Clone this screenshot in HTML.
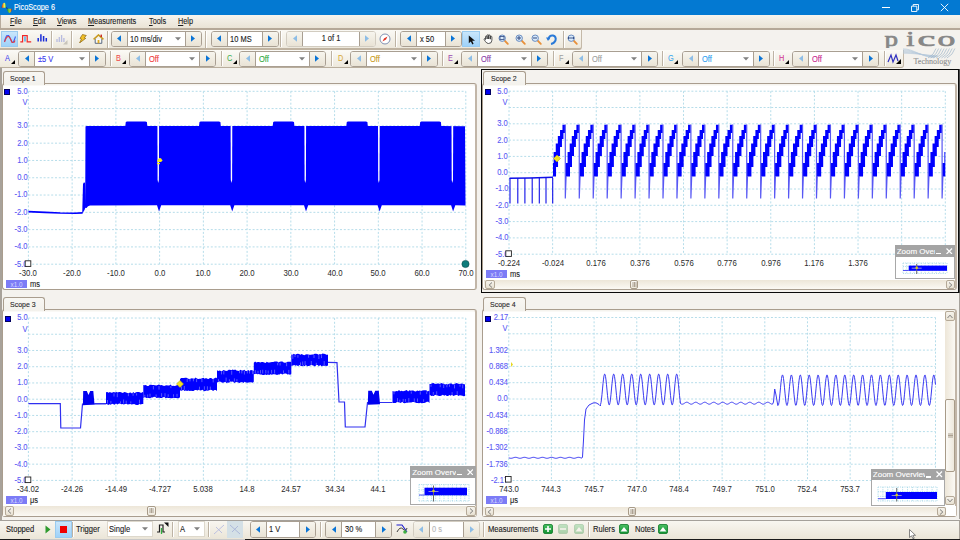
<!DOCTYPE html><html><head><meta charset="utf-8"><style>
html,body{margin:0;padding:0;width:960px;height:540px;overflow:hidden;background:#F4F2EE;font-family:"Liberation Sans", sans-serif;}
div{box-sizing:border-box;-webkit-text-stroke:0.12px currentColor;}
.tb{position:absolute;background:linear-gradient(#FBFAF6,#EDE8DC);}
.ctl{position:absolute;border:1px solid #A99F92;border-radius:3px;background:#fff;overflow:hidden;}
.cb{position:absolute;top:0;bottom:0;background:linear-gradient(#F7F5EE,#E9E3D5);}
.sep{position:absolute;width:2px;border-left:1px solid #BDB3A4;border-right:1px solid #FFFFFF;}
</style></head><body>
<div style="position:absolute;left:0px;top:0px;width:960px;height:14.6px;background:#0379D2;"></div>
<svg style="position:absolute;left:1px;top:2px" width="11" height="11" viewBox="0 0 11 11"><defs><linearGradient id="ig" x1="0" x2="1"><stop offset="0" stop-color="#c01010"/><stop offset="0.35" stop-color="#f0a020"/><stop offset="0.65" stop-color="#e8f060"/><stop offset="1" stop-color="#40c040"/></linearGradient><linearGradient id="ig2" x1="0" x2="1"><stop offset="0" stop-color="#208a20"/><stop offset="0.4" stop-color="#70d030"/><stop offset="0.7" stop-color="#e0b020"/><stop offset="1" stop-color="#b02010"/></linearGradient></defs><path d="M0.5 5.8 Q1.5 0.5 3.5 0.8 Q5 1.2 5 5.8 Z" fill="url(#ig)"/><path d="M5 5.3 L5.8 5.3 L6.8 6.8 L6 7.2Z" fill="#10208a"/><path d="M6 6.8 L10.8 6.8 Q10.5 10.5 8.5 11 Q6.5 10.8 6 6.8Z" fill="url(#ig2)"/></svg>
<div style="position:absolute;left:14px;top:3.65px;font-size:8.18px;line-height:8.18px;color:#FFFFFF;white-space:nowrap;transform:scaleX(0.893);transform-origin:left center;">PicoScope 6</div>
<div style="position:absolute;left:882px;top:6.5px;width:7.5px;height:0.9px;background:#fff;"></div>
<svg style="position:absolute;left:910.5px;top:3.5px" width="8" height="8" viewBox="0 0 8 8"><path d="M0.5 2.2h5.3v5.3h-5.3z M2.2 2.2v-1.7h5.3v5.3h-1.7" fill="none" stroke="#fff" stroke-width="0.9"/></svg>
<svg style="position:absolute;left:939.5px;top:3px" width="9" height="9" viewBox="0 0 9 9"><path d="M0.8 0.8L8.2 8.2M8.2 0.8L0.8 8.2" stroke="#fff" stroke-width="0.9"/></svg>
<div style="position:absolute;left:0px;top:14.6px;width:960px;height:14.4px;background:linear-gradient(#F7F4EE,#E9E2D4);border-left:1px solid #B7AB9C;"></div>
<div style="position:absolute;left:10px;top:18.25px;font-size:8.18px;line-height:8.18px;color:#1E1E1E;white-space:nowrap;transform:scaleX(0.893);transform-origin:left center;"><u>F</u>ile</div>
<div style="position:absolute;left:33.3px;top:18.25px;font-size:8.18px;line-height:8.18px;color:#1E1E1E;white-space:nowrap;transform:scaleX(0.893);transform-origin:left center;"><u>E</u>dit</div>
<div style="position:absolute;left:57.3px;top:18.25px;font-size:8.18px;line-height:8.18px;color:#1E1E1E;white-space:nowrap;transform:scaleX(0.893);transform-origin:left center;"><u>V</u>iews</div>
<div style="position:absolute;left:88px;top:18.25px;font-size:8.18px;line-height:8.18px;color:#1E1E1E;white-space:nowrap;transform:scaleX(0.893);transform-origin:left center;"><u>M</u>easurements</div>
<div style="position:absolute;left:149px;top:18.25px;font-size:8.18px;line-height:8.18px;color:#1E1E1E;white-space:nowrap;transform:scaleX(0.893);transform-origin:left center;"><u>T</u>ools</div>
<div style="position:absolute;left:177.7px;top:18.25px;font-size:8.18px;line-height:8.18px;color:#1E1E1E;white-space:nowrap;transform:scaleX(0.893);transform-origin:left center;"><u>H</u>elp</div>
<div class="tb" style="left:0;top:29px;width:582px;height:21px;border-bottom:2px solid #BFB3A1;border-right:1px solid #C4B9A8;border-radius:0 0 3px 0;"></div>
<div class="tb" style="left:0;top:50px;width:904px;height:18px;border-bottom:1px solid #B9AE9D;border-right:1px solid #C4B9A8;border-radius:0 0 3px 0;"></div>
<div style="position:absolute;left:582px;top:29px;width:378px;height:21px;background:#F4F2EE;"></div>
<div style="position:absolute;left:904px;top:48px;width:56px;height:20px;background:#F4F2EE;"></div>
<div style="position:absolute;left:0px;top:28.2px;width:960px;height:1.6px;background:#B5A898;"></div>
<div style="position:absolute;left:1px;top:30.5px;width:17px;height:16px;background:linear-gradient(#C9E6FB,#9FD2F9);border:1px solid #9ACBEF;"></div>
<svg style="position:absolute;left:3.5px;top:34.5px" width="12" height="8" viewBox="0 0 12 8"><path d="M0.5 6.5 C2.5 -1.5,4.5 -1.5,6.5 4 S9.5 8,11.5 1.5" fill="none" stroke="#4060F0" stroke-width="1.1"/><path d="M0.5 7 C3 0,5 0,7 5 S9.5 8.5,11 5.5" fill="none" stroke="#E83838" stroke-width="1.1"/></svg>
<svg style="position:absolute;left:20px;top:35px" width="11.5" height="7.5" viewBox="0 0 11.5 7.5"><path d="M0.3 6.8H2.6V0.7H7.2V6.8H11.2" fill="none" stroke="#F02828" stroke-width="1.2"/><path d="M5 1.5V6.5" stroke="#40A8E8" stroke-width="1.4"/></svg>
<svg style="position:absolute;left:36.5px;top:34px" width="11" height="8" viewBox="0 0 11 8"><path d="M1.2 7.5V4M3.9 7.5V0.3M6.6 7.5V2M9.3 7.5V4" stroke="#1A2CD8" stroke-width="1.5"/></svg>
<div class="sep" style="left:51px;top:30.5px;height:17px;"></div>
<svg style="position:absolute;left:56px;top:33px" width="12" height="12" viewBox="0 0 12 12"><path d="M1 9V6M3.3 9V4M5.6 9V2M7.9 9V5" stroke="#B7BBE0" stroke-width="1.3"/><path d="M7 11.5L11.5 7V11.5Z" fill="#C8C4BA"/></svg>
<div class="sep" style="left:71px;top:30.5px;height:17px;"></div>
<svg style="position:absolute;left:77.5px;top:33.8px" width="9" height="9.5" viewBox="0 0 9 9.5"><path d="M4.5 0.5L8.3 1.5L6.2 3.8L7.8 4.3L1.5 9L3.5 5L2 4.4Z" fill="#F0C028" stroke="#8A6410" stroke-width="0.7" stroke-linejoin="round"/></svg>
<svg style="position:absolute;left:92.5px;top:33.5px" width="11" height="10" viewBox="0 0 11 10"><path d="M2.2 4.8V9.3H8.8V4.8" fill="#FAFAF6" stroke="#4A5A78" stroke-width="0.9"/><path d="M0.6 5.4L5.5 0.9L10.4 5.4" fill="none" stroke="#C89A20" stroke-width="1.5"/><rect x="4.6" y="6" width="1.8" height="3.3" fill="#E0A820"/><rect x="7.6" y="0.6" width="1.3" height="2.4" fill="#C81818"/></svg>
<div class="sep" style="left:107px;top:30.5px;height:17px;"></div>
<div class="ctl" style="left:110.5px;top:31px;width:91.0px;height:15.5px;"><div class="cb" style="left:0;width:16px;border-right:1px solid #A99F92;"></div><div class="cb" style="right:0;width:16px;border-left:1px solid #A99F92;"></div></div>
<svg style="position:absolute;left:116.0px;top:35.25px" width="6" height="7" viewBox="0 0 6 7"><path d="M5 0.3L1 3.5L5 6.7Z" fill="#0A74D6"/></svg>
<svg style="position:absolute;left:190.0px;top:35.25px" width="6" height="7" viewBox="0 0 6 7"><path d="M1 0.3L5 3.5L1 6.7Z" fill="#0A74D6"/></svg>
<div style="position:absolute;left:130.0px;top:34.59px;font-size:8.40px;line-height:8.40px;color:#222;white-space:nowrap;transform:scaleX(0.893);transform-origin:left center;">10 ms/div</div>
<svg style="position:absolute;left:174.5px;top:37.05px" width="6" height="4" viewBox="0 0 6 4"><path d="M0 0.2H6L3 3.5Z" fill="#808080"/></svg>
<div class="sep" style="left:205px;top:30.5px;height:17px;"></div>
<div class="ctl" style="left:210.5px;top:31px;width:68.0px;height:15.5px;"><div class="cb" style="left:0;width:16px;border-right:1px solid #A99F92;"></div><div class="cb" style="right:0;width:16px;border-left:1px solid #A99F92;"></div></div>
<svg style="position:absolute;left:216.0px;top:35.25px" width="6" height="7" viewBox="0 0 6 7"><path d="M5 0.3L1 3.5L5 6.7Z" fill="#0A74D6"/></svg>
<svg style="position:absolute;left:267.0px;top:35.25px" width="6" height="7" viewBox="0 0 6 7"><path d="M1 0.3L5 3.5L1 6.7Z" fill="#0A74D6"/></svg>
<div style="position:absolute;left:230.0px;top:34.59px;font-size:8.40px;line-height:8.40px;color:#222;white-space:nowrap;transform:scaleX(0.893);transform-origin:left center;">10 MS</div>
<div class="sep" style="left:280px;top:31px;height:16px;"></div>
<div class="ctl" style="left:286px;top:31px;width:89.5px;height:15.5px;border-color:#D2CCC0;"><div class="cb" style="left:0;width:16px;border-right:1px solid #A99F92;"></div><div class="cb" style="right:0;width:16px;border-left:1px solid #A99F92;"></div></div>
<svg style="position:absolute;left:291.5px;top:35.25px" width="6" height="7" viewBox="0 0 6 7"><path d="M5 0.3L1 3.5L5 6.7Z" fill="#8DBDE6"/></svg>
<svg style="position:absolute;left:364.0px;top:35.25px" width="6" height="7" viewBox="0 0 6 7"><path d="M1 0.3L5 3.5L1 6.7Z" fill="#8DBDE6"/></svg>
<div style="position:absolute;left:302.0px;top:34.34px;width:58px;text-align:center;font-size:8.40px;line-height:8.40px;color:#222;white-space:nowrap;transform:scaleX(0.893);">1 of 1</div>
<svg style="position:absolute;left:379px;top:33px" width="12" height="12" viewBox="0 0 12 12"><circle cx="6" cy="6" r="5" fill="#fff" stroke="#8090B0" stroke-width="1"/><path d="M8.5 3.5L5 5.5L3.5 8.5L7 6.5Z" fill="#E03020"/></svg>
<div class="sep" style="left:394.5px;top:31px;height:16px;"></div>
<div class="ctl" style="left:400px;top:31px;width:61.5px;height:15.5px;"><div class="cb" style="left:0;width:16px;border-right:1px solid #A99F92;"></div><div class="cb" style="right:0;width:16px;border-left:1px solid #A99F92;"></div></div>
<svg style="position:absolute;left:405.5px;top:35.25px" width="6" height="7" viewBox="0 0 6 7"><path d="M5 0.3L1 3.5L5 6.7Z" fill="#0A74D6"/></svg>
<svg style="position:absolute;left:450.0px;top:35.25px" width="6" height="7" viewBox="0 0 6 7"><path d="M1 0.3L5 3.5L1 6.7Z" fill="#0A74D6"/></svg>
<div style="position:absolute;left:419.5px;top:34.59px;font-size:8.40px;line-height:8.40px;color:#222;white-space:nowrap;transform:scaleX(0.893);transform-origin:left center;">x 50</div>
<div style="position:absolute;left:462px;top:30.5px;width:18px;height:16px;background:linear-gradient(#C9E6FB,#9FD2F9);border:1px solid #9ACBEF;"></div>
<svg style="position:absolute;left:467.5px;top:34.5px" width="8" height="10" viewBox="0 0 8 10"><path d="M0.8 0.5V8.3L2.8 6.4L4.4 9.4L5.6 8.8L4.2 5.8H7Z" fill="#111"/></svg>
<svg style="position:absolute;left:482.5px;top:34px" width="11" height="10" viewBox="0 0 11 10"><path d="M2.5 5.5V2.8Q2.5 2 3.3 2T4.1 2.8V5V1.5Q4.1 0.7 4.9 0.7T5.7 1.5V5V1.8Q5.7 1 6.5 1T7.3 1.8V5.2V3Q7.3 2.2 8.1 2.2T8.9 3V6.2Q8.9 9.5 5.6 9.5Q3.6 9.5 2.5 7.6L1.2 5.6Q0.8 4.8 1.6 4.6T2.5 5.5Z" fill="#fff" stroke="#222" stroke-width="0.75"/></svg>
<svg style="position:absolute;left:497px;top:32.5px" width="13" height="13" viewBox="0 0 13 13"><path d="M7.2 7.2L10.8 10.8" stroke="#E8903A" stroke-width="1.9" stroke-linecap="round"/><circle cx="5.2" cy="5.2" r="3.2" fill="#D8EAFA" stroke="#6A8CC0" stroke-width="1"/><rect x="3" y="3.5" width="4" height="3" fill="none" stroke="#304880" stroke-width="0.8"/></svg>
<svg style="position:absolute;left:514px;top:32.5px" width="13" height="13" viewBox="0 0 13 13"><path d="M7.2 7.2L10.8 10.8" stroke="#E8903A" stroke-width="1.9" stroke-linecap="round"/><circle cx="5.2" cy="5.2" r="3.2" fill="#D8EAFA" stroke="#6A8CC0" stroke-width="1"/><path d="M3 5H7M5 3V7" stroke="#304880" stroke-width="1"/></svg>
<svg style="position:absolute;left:530px;top:32.5px" width="13" height="13" viewBox="0 0 13 13"><path d="M7.2 7.2L10.8 10.8" stroke="#E8903A" stroke-width="1.9" stroke-linecap="round"/><circle cx="5.2" cy="5.2" r="3.2" fill="#D8EAFA" stroke="#6A8CC0" stroke-width="1"/><path d="M3 5H7" stroke="#304880" stroke-width="1"/></svg>
<svg style="position:absolute;left:546px;top:32.5px" width="12" height="13" viewBox="0 0 12 13"><path d="M2.5 6.5Q3 2 7 2.5Q10.5 3.5 9.5 7.5Q8 10.5 5 11" fill="none" stroke="#2A7AD8" stroke-width="2"/><path d="M0 4.5L4.5 4.5L2 8Z" fill="#2A7AD8"/></svg>
<div class="sep" style="left:563px;top:30.5px;height:17px;"></div>
<svg style="position:absolute;left:566px;top:32.5px" width="13" height="13" viewBox="0 0 13 13"><path d="M7.2 7.2L10.8 10.8" stroke="#E8903A" stroke-width="1.9" stroke-linecap="round"/><circle cx="5.2" cy="5.2" r="3.2" fill="#D8EAFA" stroke="#6A8CC0" stroke-width="1"/><path d="M2.5 5H7.5M2.5 4V6M7.5 4V6" stroke="#304880" stroke-width="0.9"/></svg>
<div style="position:absolute;left:4.5px;top:54.65px;font-size:8.18px;line-height:8.18px;color:#3A3AF0;white-space:nowrap;transform:scaleX(0.893);transform-origin:left center;-webkit-text-stroke:0.05px currentColor;">A</div>
<svg style="position:absolute;left:10.5px;top:60px" width="4" height="4" viewBox="0 0 4 4"><path d="M4 0V4H0Z" fill="#000"/></svg>
<div class="ctl" style="left:18px;top:51px;width:87.5px;height:15.5px;"><div class="cb" style="left:0;width:16px;border-right:1px solid #A99F92;"></div><div class="cb" style="right:0;width:16px;border-left:1px solid #A99F92;"></div></div>
<svg style="position:absolute;left:23.5px;top:55.25px" width="6" height="7" viewBox="0 0 6 7"><path d="M5 0.3L1 3.5L5 6.7Z" fill="#0A74D6"/></svg>
<svg style="position:absolute;left:94.0px;top:55.25px" width="6" height="7" viewBox="0 0 6 7"><path d="M1 0.3L5 3.5L1 6.7Z" fill="#0A74D6"/></svg>
<div style="position:absolute;left:37.5px;top:54.59px;font-size:8.40px;line-height:8.40px;color:#3A3AF0;white-space:nowrap;transform:scaleX(0.893);transform-origin:left center;">±5 V</div>
<svg style="position:absolute;left:78.5px;top:57.05px" width="6" height="4" viewBox="0 0 6 4"><path d="M0 0.2H6L3 3.5Z" fill="#808080"/></svg>
<div style="position:absolute;left:115.5px;top:54.65px;font-size:8.18px;line-height:8.18px;color:#F04848;white-space:nowrap;transform:scaleX(0.893);transform-origin:left center;-webkit-text-stroke:0.05px currentColor;">B</div>
<svg style="position:absolute;left:121.5px;top:60px" width="4" height="4" viewBox="0 0 4 4"><path d="M4 0V4H0Z" fill="#000"/></svg>
<div class="ctl" style="left:129px;top:51px;width:87px;height:15.5px;"><div class="cb" style="left:0;width:16px;border-right:1px solid #A99F92;"></div><div class="cb" style="right:0;width:16px;border-left:1px solid #A99F92;"></div></div>
<svg style="position:absolute;left:134.5px;top:55.25px" width="6" height="7" viewBox="0 0 6 7"><path d="M5 0.3L1 3.5L5 6.7Z" fill="#8DBDE6"/></svg>
<svg style="position:absolute;left:204.5px;top:55.25px" width="6" height="7" viewBox="0 0 6 7"><path d="M1 0.3L5 3.5L1 6.7Z" fill="#0A74D6"/></svg>
<div style="position:absolute;left:148.5px;top:54.59px;font-size:8.40px;line-height:8.40px;color:#F03838;white-space:nowrap;transform:scaleX(0.893);transform-origin:left center;">Off</div>
<svg style="position:absolute;left:189px;top:57.05px" width="6" height="4" viewBox="0 0 6 4"><path d="M0 0.2H6L3 3.5Z" fill="#808080"/></svg>
<div style="position:absolute;left:226.8px;top:54.65px;font-size:8.18px;line-height:8.18px;color:#3CB050;white-space:nowrap;transform:scaleX(0.893);transform-origin:left center;-webkit-text-stroke:0.05px currentColor;">C</div>
<svg style="position:absolute;left:232.8px;top:60px" width="4" height="4" viewBox="0 0 4 4"><path d="M4 0V4H0Z" fill="#000"/></svg>
<div class="ctl" style="left:239px;top:51px;width:86.5px;height:15.5px;"><div class="cb" style="left:0;width:16px;border-right:1px solid #A99F92;"></div><div class="cb" style="right:0;width:16px;border-left:1px solid #A99F92;"></div></div>
<svg style="position:absolute;left:244.5px;top:55.25px" width="6" height="7" viewBox="0 0 6 7"><path d="M5 0.3L1 3.5L5 6.7Z" fill="#8DBDE6"/></svg>
<svg style="position:absolute;left:314.0px;top:55.25px" width="6" height="7" viewBox="0 0 6 7"><path d="M1 0.3L5 3.5L1 6.7Z" fill="#0A74D6"/></svg>
<div style="position:absolute;left:258.5px;top:54.59px;font-size:8.40px;line-height:8.40px;color:#30A840;white-space:nowrap;transform:scaleX(0.893);transform-origin:left center;">Off</div>
<svg style="position:absolute;left:298.5px;top:57.05px" width="6" height="4" viewBox="0 0 6 4"><path d="M0 0.2H6L3 3.5Z" fill="#808080"/></svg>
<div style="position:absolute;left:337.5px;top:54.65px;font-size:8.18px;line-height:8.18px;color:#D8A838;white-space:nowrap;transform:scaleX(0.893);transform-origin:left center;-webkit-text-stroke:0.05px currentColor;">D</div>
<svg style="position:absolute;left:343.5px;top:60px" width="4" height="4" viewBox="0 0 4 4"><path d="M4 0V4H0Z" fill="#000"/></svg>
<div class="ctl" style="left:350px;top:51px;width:87.5px;height:15.5px;"><div class="cb" style="left:0;width:16px;border-right:1px solid #A99F92;"></div><div class="cb" style="right:0;width:16px;border-left:1px solid #A99F92;"></div></div>
<svg style="position:absolute;left:355.5px;top:55.25px" width="6" height="7" viewBox="0 0 6 7"><path d="M5 0.3L1 3.5L5 6.7Z" fill="#8DBDE6"/></svg>
<svg style="position:absolute;left:426.0px;top:55.25px" width="6" height="7" viewBox="0 0 6 7"><path d="M1 0.3L5 3.5L1 6.7Z" fill="#0A74D6"/></svg>
<div style="position:absolute;left:369.5px;top:54.59px;font-size:8.40px;line-height:8.40px;color:#C89A20;white-space:nowrap;transform:scaleX(0.893);transform-origin:left center;">Off</div>
<svg style="position:absolute;left:410.5px;top:57.05px" width="6" height="4" viewBox="0 0 6 4"><path d="M0 0.2H6L3 3.5Z" fill="#808080"/></svg>
<div style="position:absolute;left:447.5px;top:54.65px;font-size:8.18px;line-height:8.18px;color:#9A4AB0;white-space:nowrap;transform:scaleX(0.893);transform-origin:left center;-webkit-text-stroke:0.05px currentColor;">E</div>
<svg style="position:absolute;left:453.5px;top:60px" width="4" height="4" viewBox="0 0 4 4"><path d="M4 0V4H0Z" fill="#000"/></svg>
<div class="ctl" style="left:461px;top:51px;width:86.5px;height:15.5px;"><div class="cb" style="left:0;width:16px;border-right:1px solid #A99F92;"></div><div class="cb" style="right:0;width:16px;border-left:1px solid #A99F92;"></div></div>
<svg style="position:absolute;left:466.5px;top:55.25px" width="6" height="7" viewBox="0 0 6 7"><path d="M5 0.3L1 3.5L5 6.7Z" fill="#8DBDE6"/></svg>
<svg style="position:absolute;left:536.0px;top:55.25px" width="6" height="7" viewBox="0 0 6 7"><path d="M1 0.3L5 3.5L1 6.7Z" fill="#0A74D6"/></svg>
<div style="position:absolute;left:480.5px;top:54.59px;font-size:8.40px;line-height:8.40px;color:#8A40A8;white-space:nowrap;transform:scaleX(0.893);transform-origin:left center;">Off</div>
<svg style="position:absolute;left:520.5px;top:57.05px" width="6" height="4" viewBox="0 0 6 4"><path d="M0 0.2H6L3 3.5Z" fill="#808080"/></svg>
<div style="position:absolute;left:558.5px;top:54.65px;font-size:8.18px;line-height:8.18px;color:#A0A0A0;white-space:nowrap;transform:scaleX(0.893);transform-origin:left center;-webkit-text-stroke:0.05px currentColor;">F</div>
<svg style="position:absolute;left:564.5px;top:60px" width="4" height="4" viewBox="0 0 4 4"><path d="M4 0V4H0Z" fill="#000"/></svg>
<div class="ctl" style="left:572px;top:51px;width:86px;height:15.5px;"><div class="cb" style="left:0;width:16px;border-right:1px solid #A99F92;"></div><div class="cb" style="right:0;width:16px;border-left:1px solid #A99F92;"></div></div>
<svg style="position:absolute;left:577.5px;top:55.25px" width="6" height="7" viewBox="0 0 6 7"><path d="M5 0.3L1 3.5L5 6.7Z" fill="#8DBDE6"/></svg>
<svg style="position:absolute;left:646.5px;top:55.25px" width="6" height="7" viewBox="0 0 6 7"><path d="M1 0.3L5 3.5L1 6.7Z" fill="#0A74D6"/></svg>
<div style="position:absolute;left:591.5px;top:54.59px;font-size:8.40px;line-height:8.40px;color:#A0A0A0;white-space:nowrap;transform:scaleX(0.893);transform-origin:left center;">Off</div>
<svg style="position:absolute;left:631px;top:57.05px" width="6" height="4" viewBox="0 0 6 4"><path d="M0 0.2H6L3 3.5Z" fill="#808080"/></svg>
<div style="position:absolute;left:668px;top:54.65px;font-size:8.18px;line-height:8.18px;color:#38A8F0;white-space:nowrap;transform:scaleX(0.893);transform-origin:left center;-webkit-text-stroke:0.05px currentColor;">G</div>
<svg style="position:absolute;left:674px;top:60px" width="4" height="4" viewBox="0 0 4 4"><path d="M4 0V4H0Z" fill="#000"/></svg>
<div class="ctl" style="left:682px;top:51px;width:87.5px;height:15.5px;"><div class="cb" style="left:0;width:16px;border-right:1px solid #A99F92;"></div><div class="cb" style="right:0;width:16px;border-left:1px solid #A99F92;"></div></div>
<svg style="position:absolute;left:687.5px;top:55.25px" width="6" height="7" viewBox="0 0 6 7"><path d="M5 0.3L1 3.5L5 6.7Z" fill="#8DBDE6"/></svg>
<svg style="position:absolute;left:758.0px;top:55.25px" width="6" height="7" viewBox="0 0 6 7"><path d="M1 0.3L5 3.5L1 6.7Z" fill="#0A74D6"/></svg>
<div style="position:absolute;left:701.5px;top:54.59px;font-size:8.40px;line-height:8.40px;color:#30A0F0;white-space:nowrap;transform:scaleX(0.893);transform-origin:left center;">Off</div>
<svg style="position:absolute;left:742.5px;top:57.05px" width="6" height="4" viewBox="0 0 6 4"><path d="M0 0.2H6L3 3.5Z" fill="#808080"/></svg>
<div style="position:absolute;left:779px;top:54.65px;font-size:8.18px;line-height:8.18px;color:#D03090;white-space:nowrap;transform:scaleX(0.893);transform-origin:left center;-webkit-text-stroke:0.05px currentColor;">H</div>
<svg style="position:absolute;left:785px;top:60px" width="4" height="4" viewBox="0 0 4 4"><path d="M4 0V4H0Z" fill="#000"/></svg>
<div class="ctl" style="left:792px;top:51px;width:87px;height:15.5px;"><div class="cb" style="left:0;width:16px;border-right:1px solid #A99F92;"></div><div class="cb" style="right:0;width:16px;border-left:1px solid #A99F92;"></div></div>
<svg style="position:absolute;left:797.5px;top:55.25px" width="6" height="7" viewBox="0 0 6 7"><path d="M5 0.3L1 3.5L5 6.7Z" fill="#8DBDE6"/></svg>
<svg style="position:absolute;left:867.5px;top:55.25px" width="6" height="7" viewBox="0 0 6 7"><path d="M1 0.3L5 3.5L1 6.7Z" fill="#0A74D6"/></svg>
<div style="position:absolute;left:811.5px;top:54.59px;font-size:8.40px;line-height:8.40px;color:#C82890;white-space:nowrap;transform:scaleX(0.893);transform-origin:left center;">Off</div>
<svg style="position:absolute;left:852px;top:57.05px" width="6" height="4" viewBox="0 0 6 4"><path d="M0 0.2H6L3 3.5Z" fill="#808080"/></svg>
<div class="sep" style="left:109.5px;top:51px;height:15px;"></div>
<div class="sep" style="left:220.5px;top:51px;height:15px;"></div>
<div class="sep" style="left:331.2px;top:51px;height:15px;"></div>
<div class="sep" style="left:441.5px;top:51px;height:15px;"></div>
<div class="sep" style="left:552.5px;top:51px;height:15px;"></div>
<div class="sep" style="left:661.8px;top:51px;height:15px;"></div>
<div class="sep" style="left:773px;top:51px;height:15px;"></div>
<div class="sep" style="left:883.5px;top:51px;height:15px;"></div>
<svg style="position:absolute;left:887px;top:53px" width="14" height="11" viewBox="0 0 14 11"><path d="M1 9L4 2L6 9L9 2L11 8" fill="none" stroke="#3030C0" stroke-width="1.2"/><path d="M14 6V11H9Z" fill="#000"/></svg>
<div style="position:absolute;left:884px;top:28px;width:76px;height:20px;overflow:hidden;">
<svg style="position:absolute;left:-884px;top:-28px" width="960" height="80" viewBox="0 0 960 80"><g font-family="Liberation Serif" font-size="22" fill="#878787" stroke="#878787" stroke-width="0.7"><text transform="translate(884.6,45.9) scale(1.23,1)">p</text><text transform="translate(906.3,45.9) scale(1.33,1)">i</text><text transform="translate(917.5,45.9) scale(1.82,1)">c</text><text transform="translate(937.4,45.9) scale(1.62,1)">o</text></g></svg></div>
<svg style="position:absolute;left:0;top:0" width="960" height="80" viewBox="0 0 960 80"><path d="M903.0 48.8 C914.0 48.8, 922.0 57.5, 934.0 57.5" fill="none" stroke="#B4C8DA" stroke-width="0.6"/><path d="M903.0 49.7 C914.0 49.7, 922.0 56.9, 934.8 57.2" fill="none" stroke="#B4C8DA" stroke-width="0.6"/><path d="M903.0 50.6 C914.0 50.6, 922.0 56.3, 935.6 56.9" fill="none" stroke="#B4C8DA" stroke-width="0.6"/><path d="M903.0 51.5 C914.0 51.5, 922.0 55.7, 936.4 56.6" fill="none" stroke="#B4C8DA" stroke-width="0.6"/><path d="M903.0 52.4 C914.0 52.4, 922.0 55.1, 937.2 56.3" fill="none" stroke="#B4C8DA" stroke-width="0.6"/><path d="M903.0 53.3 C914.0 53.3, 922.0 54.5, 938.0 56.0" fill="none" stroke="#B4C8DA" stroke-width="0.6"/><path d="M928.0 58 Q934.0 55, 936.0 48.5" fill="none" stroke="#94ACC2" stroke-width="0.6"/><path d="M930.7 58 Q936.7 55, 938.7 48.5" fill="none" stroke="#94ACC2" stroke-width="0.6"/><path d="M933.4 58 Q939.4 55, 941.4 48.5" fill="none" stroke="#94ACC2" stroke-width="0.6"/><path d="M936.1 58 Q942.1 55, 944.1 48.5" fill="none" stroke="#94ACC2" stroke-width="0.6"/><path d="M938.8 58 Q944.8 55, 946.8 48.5" fill="none" stroke="#94ACC2" stroke-width="0.6"/><path d="M941.5 58 Q947.5 55, 949.5 48.5" fill="none" stroke="#94ACC2" stroke-width="0.6"/><path d="M944.2 58 Q950.2 55, 952.2 48.5" fill="none" stroke="#94ACC2" stroke-width="0.6"/><path d="M946.9 58 Q952.9 55, 954.9 48.5" fill="none" stroke="#94ACC2" stroke-width="0.6"/></svg>
<div style="position:absolute;left:913.5px;top:58.3px;font-family:'Liberation Serif',serif;font-size:8px;line-height:8px;color:#8E8E8E;">Technology</div>
<div style="position:absolute;left:0px;top:68px;width:1.5px;height:472px;background:#A8A29A;"></div>
<div style="position:absolute;left:958.9px;top:293px;width:1.1px;height:226px;background:#A6A29C;"></div>
<div style="position:absolute;left:2px;top:83px;width:475px;height:207px;border:1px solid #A99D8E;border-right:2px solid #C2B6A8;border-radius:3px;background:#fff;box-shadow:inset 0 1.5px 0 #F5F3EE;"></div>
<div style="position:absolute;left:2.5px;top:70.5px;width:42.5px;height:14.7px;border:1px solid #A99D8E;border-bottom:none;border-radius:3px 3px 0 0;background:linear-gradient(#F8F7F3,#F3F1EC);"></div>
<div style="position:absolute;left:10.0px;top:74.76px;font-size:7.84px;line-height:7.84px;color:#2A2A2A;white-space:nowrap;transform:scaleX(0.893);transform-origin:left center;">Scope 1</div>
<div style="position:absolute;left:482px;top:83px;width:475px;height:207px;border:1px solid #A99D8E;border-right:2px solid #C2B6A8;border-radius:3px;background:#fff;box-shadow:inset 0 1.5px 0 #F5F3EE;"></div>
<div style="position:absolute;left:483px;top:70.8px;width:42.5px;height:14.400000000000002px;border:1px solid #A99D8E;border-bottom:none;border-radius:3px 3px 0 0;background:linear-gradient(#F8F7F3,#F3F1EC);"></div>
<div style="position:absolute;left:490.5px;top:75.06px;font-size:7.84px;line-height:7.84px;color:#2A2A2A;white-space:nowrap;transform:scaleX(0.893);transform-origin:left center;">Scope 2</div>
<div style="position:absolute;left:481px;top:69px;width:478px;height:224px;border:1px solid #0A0A0A;"></div>
<div style="position:absolute;left:959px;top:69px;width:1px;height:224px;background:#4A4A4A;"></div>
<div style="position:absolute;left:2px;top:309px;width:475px;height:208px;border:1px solid #A99D8E;border-right:2px solid #C2B6A8;border-radius:3px;background:#fff;box-shadow:inset 0 1.5px 0 #F5F3EE;"></div>
<div style="position:absolute;left:2.5px;top:297px;width:42.5px;height:14.2px;border:1px solid #A99D8E;border-bottom:none;border-radius:3px 3px 0 0;background:linear-gradient(#F8F7F3,#F3F1EC);"></div>
<div style="position:absolute;left:10.0px;top:301.26px;font-size:7.84px;line-height:7.84px;color:#2A2A2A;white-space:nowrap;transform:scaleX(0.893);transform-origin:left center;">Scope 3</div>
<div style="position:absolute;left:482px;top:309px;width:475px;height:208px;border:1px solid #A99D8E;border-right:2px solid #C2B6A8;border-radius:3px;background:#fff;box-shadow:inset 0 1.5px 0 #F5F3EE;"></div>
<div style="position:absolute;left:482.5px;top:297px;width:43.0px;height:14.2px;border:1px solid #A99D8E;border-bottom:none;border-radius:3px 3px 0 0;background:linear-gradient(#F8F7F3,#F3F1EC);"></div>
<div style="position:absolute;left:490.0px;top:301.26px;font-size:7.84px;line-height:7.84px;color:#2A2A2A;white-space:nowrap;transform:scaleX(0.893);transform-origin:left center;">Scope 4</div>
<svg style="position:absolute;left:0;top:0" width="960" height="540" viewBox="0 0 960 540"><path d="M28.40 91.3V264.2M72.14 91.3V264.2M115.88 91.3V264.2M159.62 91.3V264.2M203.36 91.3V264.2M247.10 91.3V264.2M290.84 91.3V264.2M334.58 91.3V264.2M378.32 91.3V264.2M422.06 91.3V264.2M465.80 91.3V264.2M28.4 91.30H465.8M28.4 108.59H465.8M28.4 125.88H465.8M28.4 143.17H465.8M28.4 160.46H465.8M28.4 177.75H465.8M28.4 195.04H465.8M28.4 212.33H465.8M28.4 229.62H465.8M28.4 246.91H465.8M28.4 264.20H465.8" stroke="#B6DDEA" stroke-width="1" stroke-dasharray="2 1.8" fill="none"/></svg>
<div style="position:absolute;left:4px;top:89px;width:6px;height:6px;background:#0000F0;border:1px solid #000060;"></div>
<div style="position:absolute;right:932.5px;top:86.70px;font-size:8.40px;line-height:8.40px;color:#5A5AF5;white-space:nowrap;text-align:right;transform-origin:right center;-webkit-text-stroke:0.1px currentColor;transform:scaleX(0.9);transform-origin:right center;">5.0</div>
<div style="position:absolute;right:932.5px;top:98.20px;font-size:8.40px;line-height:8.40px;color:#5A5AF5;white-space:nowrap;text-align:right;transform-origin:right center;-webkit-text-stroke:0.1px currentColor;transform:scaleX(0.9);transform-origin:right center;">V</div>
<div style="position:absolute;right:932.5px;top:121.28px;font-size:8.40px;line-height:8.40px;color:#5A5AF5;white-space:nowrap;text-align:right;transform-origin:right center;-webkit-text-stroke:0.1px currentColor;transform:scaleX(0.9);transform-origin:right center;">3.0</div>
<div style="position:absolute;right:932.5px;top:138.57px;font-size:8.40px;line-height:8.40px;color:#5A5AF5;white-space:nowrap;text-align:right;transform-origin:right center;-webkit-text-stroke:0.1px currentColor;transform:scaleX(0.9);transform-origin:right center;">2.0</div>
<div style="position:absolute;right:932.5px;top:155.86px;font-size:8.40px;line-height:8.40px;color:#5A5AF5;white-space:nowrap;text-align:right;transform-origin:right center;-webkit-text-stroke:0.1px currentColor;transform:scaleX(0.9);transform-origin:right center;">1.0</div>
<div style="position:absolute;right:932.5px;top:173.15px;font-size:8.40px;line-height:8.40px;color:#5A5AF5;white-space:nowrap;text-align:right;transform-origin:right center;-webkit-text-stroke:0.1px currentColor;transform:scaleX(0.9);transform-origin:right center;">0.0</div>
<div style="position:absolute;right:932.5px;top:190.44px;font-size:8.40px;line-height:8.40px;color:#5A5AF5;white-space:nowrap;text-align:right;transform-origin:right center;-webkit-text-stroke:0.1px currentColor;transform:scaleX(0.9);transform-origin:right center;">-1.0</div>
<div style="position:absolute;right:932.5px;top:207.73px;font-size:8.40px;line-height:8.40px;color:#5A5AF5;white-space:nowrap;text-align:right;transform-origin:right center;-webkit-text-stroke:0.1px currentColor;transform:scaleX(0.9);transform-origin:right center;">-2.0</div>
<div style="position:absolute;right:932.5px;top:225.02px;font-size:8.40px;line-height:8.40px;color:#5A5AF5;white-space:nowrap;text-align:right;transform-origin:right center;-webkit-text-stroke:0.1px currentColor;transform:scaleX(0.9);transform-origin:right center;">-3.0</div>
<div style="position:absolute;right:932.5px;top:242.31px;font-size:8.40px;line-height:8.40px;color:#5A5AF5;white-space:nowrap;text-align:right;transform-origin:right center;-webkit-text-stroke:0.1px currentColor;transform:scaleX(0.9);transform-origin:right center;">-4.0</div>
<div style="position:absolute;right:932.5px;top:259.60px;font-size:8.40px;line-height:8.40px;color:#5A5AF5;white-space:nowrap;text-align:right;transform-origin:right center;-webkit-text-stroke:0.1px currentColor;transform:scaleX(0.9);transform-origin:right center;">-5.0</div>
<div style="position:absolute;left:8.399999999999999px;top:269.00px;width:40px;text-align:center;font-size:8.40px;line-height:8.40px;color:#2A2A2A;white-space:nowrap;-webkit-text-stroke:0;transform:scaleX(0.93);">-30.0</div>
<div style="position:absolute;left:52.14px;top:269.00px;width:40px;text-align:center;font-size:8.40px;line-height:8.40px;color:#2A2A2A;white-space:nowrap;-webkit-text-stroke:0;transform:scaleX(0.93);">-20.0</div>
<div style="position:absolute;left:95.88px;top:269.00px;width:40px;text-align:center;font-size:8.40px;line-height:8.40px;color:#2A2A2A;white-space:nowrap;-webkit-text-stroke:0;transform:scaleX(0.93);">-10.0</div>
<div style="position:absolute;left:139.62px;top:269.00px;width:40px;text-align:center;font-size:8.40px;line-height:8.40px;color:#2A2A2A;white-space:nowrap;-webkit-text-stroke:0;transform:scaleX(0.93);">0.0</div>
<div style="position:absolute;left:183.36px;top:269.00px;width:40px;text-align:center;font-size:8.40px;line-height:8.40px;color:#2A2A2A;white-space:nowrap;-webkit-text-stroke:0;transform:scaleX(0.93);">10.0</div>
<div style="position:absolute;left:227.1px;top:269.00px;width:40px;text-align:center;font-size:8.40px;line-height:8.40px;color:#2A2A2A;white-space:nowrap;-webkit-text-stroke:0;transform:scaleX(0.93);">20.0</div>
<div style="position:absolute;left:270.84px;top:269.00px;width:40px;text-align:center;font-size:8.40px;line-height:8.40px;color:#2A2A2A;white-space:nowrap;-webkit-text-stroke:0;transform:scaleX(0.93);">30.0</div>
<div style="position:absolute;left:314.58px;top:269.00px;width:40px;text-align:center;font-size:8.40px;line-height:8.40px;color:#2A2A2A;white-space:nowrap;-webkit-text-stroke:0;transform:scaleX(0.93);">40.0</div>
<div style="position:absolute;left:358.32px;top:269.00px;width:40px;text-align:center;font-size:8.40px;line-height:8.40px;color:#2A2A2A;white-space:nowrap;-webkit-text-stroke:0;transform:scaleX(0.93);">50.0</div>
<div style="position:absolute;left:402.06px;top:269.00px;width:40px;text-align:center;font-size:8.40px;line-height:8.40px;color:#2A2A2A;white-space:nowrap;-webkit-text-stroke:0;transform:scaleX(0.93);">60.0</div>
<div style="position:absolute;left:445.79999999999995px;top:269.00px;width:40px;text-align:center;font-size:8.40px;line-height:8.40px;color:#2A2A2A;white-space:nowrap;-webkit-text-stroke:0;transform:scaleX(0.93);">70.0</div>
<div style="position:absolute;left:6px;top:280px;width:21px;height:8px;background:#7C7CF6;"></div>
<div style="position:absolute;left:6.0px;top:280.70px;width:21px;text-align:center;font-size:7.06px;line-height:7.06px;color:#D8D8FF;white-space:nowrap;transform:scaleX(0.893);-webkit-text-stroke:0;">x1.0</div>
<div style="position:absolute;left:30px;top:280.14px;font-size:8.40px;line-height:8.40px;color:#222;white-space:nowrap;transform:scaleX(0.893);transform-origin:left center;">ms</div>
<svg style="position:absolute;left:0;top:0" width="960" height="540" viewBox="0 0 960 540"><path d="M509.00 91.2V254.2M552.63 91.2V254.2M596.26 91.2V254.2M639.89 91.2V254.2M683.52 91.2V254.2M727.15 91.2V254.2M770.78 91.2V254.2M814.41 91.2V254.2M858.04 91.2V254.2M901.67 91.2V254.2M945.30 91.2V254.2M509 91.20H945.3M509 107.50H945.3M509 123.80H945.3M509 140.10H945.3M509 156.40H945.3M509 172.70H945.3M509 189.00H945.3M509 205.30H945.3M509 221.60H945.3M509 237.90H945.3M509 254.20H945.3" stroke="#B6DDEA" stroke-width="1" stroke-dasharray="2 1.8" fill="none"/></svg>
<div style="position:absolute;left:485px;top:89px;width:6px;height:6px;background:#0000F0;border:1px solid #000060;"></div>
<div style="position:absolute;right:452px;top:86.60px;font-size:8.40px;line-height:8.40px;color:#5A5AF5;white-space:nowrap;text-align:right;transform-origin:right center;-webkit-text-stroke:0.1px currentColor;transform:scaleX(0.9);transform-origin:right center;">5.0</div>
<div style="position:absolute;right:452px;top:98.10px;font-size:8.40px;line-height:8.40px;color:#5A5AF5;white-space:nowrap;text-align:right;transform-origin:right center;-webkit-text-stroke:0.1px currentColor;transform:scaleX(0.9);transform-origin:right center;">V</div>
<div style="position:absolute;right:452px;top:119.20px;font-size:8.40px;line-height:8.40px;color:#5A5AF5;white-space:nowrap;text-align:right;transform-origin:right center;-webkit-text-stroke:0.1px currentColor;transform:scaleX(0.9);transform-origin:right center;">3.0</div>
<div style="position:absolute;right:452px;top:135.50px;font-size:8.40px;line-height:8.40px;color:#5A5AF5;white-space:nowrap;text-align:right;transform-origin:right center;-webkit-text-stroke:0.1px currentColor;transform:scaleX(0.9);transform-origin:right center;">2.0</div>
<div style="position:absolute;right:452px;top:151.80px;font-size:8.40px;line-height:8.40px;color:#5A5AF5;white-space:nowrap;text-align:right;transform-origin:right center;-webkit-text-stroke:0.1px currentColor;transform:scaleX(0.9);transform-origin:right center;">1.0</div>
<div style="position:absolute;right:452px;top:168.10px;font-size:8.40px;line-height:8.40px;color:#5A5AF5;white-space:nowrap;text-align:right;transform-origin:right center;-webkit-text-stroke:0.1px currentColor;transform:scaleX(0.9);transform-origin:right center;">0.0</div>
<div style="position:absolute;right:452px;top:184.40px;font-size:8.40px;line-height:8.40px;color:#5A5AF5;white-space:nowrap;text-align:right;transform-origin:right center;-webkit-text-stroke:0.1px currentColor;transform:scaleX(0.9);transform-origin:right center;">-1.0</div>
<div style="position:absolute;right:452px;top:200.70px;font-size:8.40px;line-height:8.40px;color:#5A5AF5;white-space:nowrap;text-align:right;transform-origin:right center;-webkit-text-stroke:0.1px currentColor;transform:scaleX(0.9);transform-origin:right center;">-2.0</div>
<div style="position:absolute;right:452px;top:217.00px;font-size:8.40px;line-height:8.40px;color:#5A5AF5;white-space:nowrap;text-align:right;transform-origin:right center;-webkit-text-stroke:0.1px currentColor;transform:scaleX(0.9);transform-origin:right center;">-3.0</div>
<div style="position:absolute;right:452px;top:233.30px;font-size:8.40px;line-height:8.40px;color:#5A5AF5;white-space:nowrap;text-align:right;transform-origin:right center;-webkit-text-stroke:0.1px currentColor;transform:scaleX(0.9);transform-origin:right center;">-4.0</div>
<div style="position:absolute;right:452px;top:249.60px;font-size:8.40px;line-height:8.40px;color:#5A5AF5;white-space:nowrap;text-align:right;transform-origin:right center;-webkit-text-stroke:0.1px currentColor;transform:scaleX(0.9);transform-origin:right center;">-5.0</div>
<div style="position:absolute;left:489.0px;top:258.50px;width:40px;text-align:center;font-size:8.40px;line-height:8.40px;color:#2A2A2A;white-space:nowrap;-webkit-text-stroke:0;transform:scaleX(0.93);">-0.224</div>
<div style="position:absolute;left:532.63px;top:258.50px;width:40px;text-align:center;font-size:8.40px;line-height:8.40px;color:#2A2A2A;white-space:nowrap;-webkit-text-stroke:0;transform:scaleX(0.93);">-0.024</div>
<div style="position:absolute;left:576.26px;top:258.50px;width:40px;text-align:center;font-size:8.40px;line-height:8.40px;color:#2A2A2A;white-space:nowrap;-webkit-text-stroke:0;transform:scaleX(0.93);">0.176</div>
<div style="position:absolute;left:619.89px;top:258.50px;width:40px;text-align:center;font-size:8.40px;line-height:8.40px;color:#2A2A2A;white-space:nowrap;-webkit-text-stroke:0;transform:scaleX(0.93);">0.376</div>
<div style="position:absolute;left:663.52px;top:258.50px;width:40px;text-align:center;font-size:8.40px;line-height:8.40px;color:#2A2A2A;white-space:nowrap;-webkit-text-stroke:0;transform:scaleX(0.93);">0.576</div>
<div style="position:absolute;left:707.15px;top:258.50px;width:40px;text-align:center;font-size:8.40px;line-height:8.40px;color:#2A2A2A;white-space:nowrap;-webkit-text-stroke:0;transform:scaleX(0.93);">0.776</div>
<div style="position:absolute;left:750.78px;top:258.50px;width:40px;text-align:center;font-size:8.40px;line-height:8.40px;color:#2A2A2A;white-space:nowrap;-webkit-text-stroke:0;transform:scaleX(0.93);">0.976</div>
<div style="position:absolute;left:794.41px;top:258.50px;width:40px;text-align:center;font-size:8.40px;line-height:8.40px;color:#2A2A2A;white-space:nowrap;-webkit-text-stroke:0;transform:scaleX(0.93);">1.176</div>
<div style="position:absolute;left:838.04px;top:258.50px;width:40px;text-align:center;font-size:8.40px;line-height:8.40px;color:#2A2A2A;white-space:nowrap;-webkit-text-stroke:0;transform:scaleX(0.93);">1.376</div>
<div style="position:absolute;left:486px;top:270px;width:21px;height:8px;background:#7C7CF6;"></div>
<div style="position:absolute;left:486.0px;top:270.70px;width:21px;text-align:center;font-size:7.06px;line-height:7.06px;color:#D8D8FF;white-space:nowrap;transform:scaleX(0.893);-webkit-text-stroke:0;">x1.0</div>
<div style="position:absolute;left:510px;top:270.14px;font-size:8.40px;line-height:8.40px;color:#222;white-space:nowrap;transform:scaleX(0.893);transform-origin:left center;">ms</div>
<div style="position:absolute;left:483.5px;top:279.5px;width:471.5px;height:9.5px;background:linear-gradient(#EDE6D8,#FBF9F4);"></div>
<div style="position:absolute;left:485.0px;top:279.5px;width:9.5px;height:9.5px;border:1px solid #B5A997;border-radius:2px;background:linear-gradient(#F6F3EC,#E8E1D2);"></div>
<svg style="position:absolute;left:487.5px;top:282.0px" width="5" height="6" viewBox="0 0 5 6"><path d="M4 0.5L1.2 3L4 5.5" fill="none" stroke="#707070" stroke-width="0.9"/></svg>
<div style="position:absolute;left:945.5px;top:279.5px;width:9.5px;height:9.5px;border:1px solid #B5A997;border-radius:2px;background:linear-gradient(#F6F3EC,#E8E1D2);"></div>
<svg style="position:absolute;left:948px;top:282.0px" width="5" height="6" viewBox="0 0 5 6"><path d="M1 0.5L3.8 3L1 5.5" fill="none" stroke="#707070" stroke-width="0.9"/></svg>
<div style="position:absolute;left:630px;top:279.5px;width:8px;height:9.5px;border:1px solid #A89B88;border-radius:2px;background:linear-gradient(#FBFAF6,#EEE8DC);"></div>
<svg style="position:absolute;left:631.5px;top:282.0px" width="5" height="5" viewBox="0 0 5 5"><path d="M1 0V5M2.5 0V5M4 0V5" stroke="#9A8E7C" stroke-width="0.8"/></svg>
<div style="position:absolute;left:894.5px;top:245.3px;width:60.5px;height:34.0px;border:1.5px solid #A8A8A8;background:#fff;"></div>
<div style="position:absolute;left:894.5px;top:245.3px;width:60.5px;height:11.5px;background:#A4A4A4;"></div>
<div style="position:absolute;left:896.7px;top:247.5px;width:38.5px;overflow:hidden;font-size:8px;line-height:8px;color:#fff;white-space:nowrap;">Zoom Overview</div>
<div style="position:absolute;left:936px;top:252.5px;width:5px;height:1.8px;background:#fff;"></div>
<svg style="position:absolute;left:946px;top:247.8px" width="6.5" height="6.5" viewBox="0 0 6.5 6.5"><path d="M0.5 0.5L6 6M6 0.5L0.5 6" stroke="#fff" stroke-width="1.2"/></svg>
<svg style="position:absolute;left:0;top:0" width="960" height="540"><path d="M903.0 263V273.5M906.7 263V273.5M910.3 263V273.5M914.0 263V273.5M917.7 263V273.5M921.3 263V273.5M925.0 263V273.5M928.7 263V273.5M932.3 263V273.5M936.0 263V273.5M939.7 263V273.5M943.3 263V273.5M947.0 263V273.5M903 263.0H947M903 266.5H947M903 270.0H947M903 273.5H947" stroke="#A8D8E8" stroke-width="0.9" stroke-dasharray="1.1 1.1" fill="none"/><path d="M903 270.5H908.7" stroke="#5050F0" stroke-width="1"/><rect x="908.7" y="265.6" width="38.3" height="5.2" fill="#0000FF"/><path d="M916.7 264V274.0" stroke="#6A6A6A" stroke-width="1"/><path d="M911.7 268.2H921.7" stroke="#8A8AD8" stroke-width="1"/><circle cx="916.7" cy="267.7" r="1.3" fill="#D8C820"/></svg>
<svg style="position:absolute;left:0;top:0" width="960" height="540" viewBox="0 0 960 540"><path d="M28.40 318V480.4M72.14 318V480.4M115.88 318V480.4M159.62 318V480.4M203.36 318V480.4M247.10 318V480.4M290.84 318V480.4M334.58 318V480.4M378.32 318V480.4M422.06 318V480.4M465.80 318V480.4M28.4 318.00H465.8M28.4 334.24H465.8M28.4 350.48H465.8M28.4 366.72H465.8M28.4 382.96H465.8M28.4 399.20H465.8M28.4 415.44H465.8M28.4 431.68H465.8M28.4 447.92H465.8M28.4 464.16H465.8M28.4 480.40H465.8" stroke="#B6DDEA" stroke-width="1" stroke-dasharray="2 1.8" fill="none"/></svg>
<div style="position:absolute;left:4.5px;top:316px;width:6px;height:6px;background:#0000F0;border:1px solid #000060;"></div>
<div style="position:absolute;right:932.5px;top:313.40px;font-size:8.40px;line-height:8.40px;color:#5A5AF5;white-space:nowrap;text-align:right;transform-origin:right center;-webkit-text-stroke:0.1px currentColor;transform:scaleX(0.9);transform-origin:right center;">5.0</div>
<div style="position:absolute;right:932.5px;top:324.90px;font-size:8.40px;line-height:8.40px;color:#5A5AF5;white-space:nowrap;text-align:right;transform-origin:right center;-webkit-text-stroke:0.1px currentColor;transform:scaleX(0.9);transform-origin:right center;">V</div>
<div style="position:absolute;right:932.5px;top:345.88px;font-size:8.40px;line-height:8.40px;color:#5A5AF5;white-space:nowrap;text-align:right;transform-origin:right center;-webkit-text-stroke:0.1px currentColor;transform:scaleX(0.9);transform-origin:right center;">3.0</div>
<div style="position:absolute;right:932.5px;top:362.12px;font-size:8.40px;line-height:8.40px;color:#5A5AF5;white-space:nowrap;text-align:right;transform-origin:right center;-webkit-text-stroke:0.1px currentColor;transform:scaleX(0.9);transform-origin:right center;">2.0</div>
<div style="position:absolute;right:932.5px;top:378.36px;font-size:8.40px;line-height:8.40px;color:#5A5AF5;white-space:nowrap;text-align:right;transform-origin:right center;-webkit-text-stroke:0.1px currentColor;transform:scaleX(0.9);transform-origin:right center;">1.0</div>
<div style="position:absolute;right:932.5px;top:394.60px;font-size:8.40px;line-height:8.40px;color:#5A5AF5;white-space:nowrap;text-align:right;transform-origin:right center;-webkit-text-stroke:0.1px currentColor;transform:scaleX(0.9);transform-origin:right center;">0.0</div>
<div style="position:absolute;right:932.5px;top:410.84px;font-size:8.40px;line-height:8.40px;color:#5A5AF5;white-space:nowrap;text-align:right;transform-origin:right center;-webkit-text-stroke:0.1px currentColor;transform:scaleX(0.9);transform-origin:right center;">-1.0</div>
<div style="position:absolute;right:932.5px;top:427.08px;font-size:8.40px;line-height:8.40px;color:#5A5AF5;white-space:nowrap;text-align:right;transform-origin:right center;-webkit-text-stroke:0.1px currentColor;transform:scaleX(0.9);transform-origin:right center;">-2.0</div>
<div style="position:absolute;right:932.5px;top:443.32px;font-size:8.40px;line-height:8.40px;color:#5A5AF5;white-space:nowrap;text-align:right;transform-origin:right center;-webkit-text-stroke:0.1px currentColor;transform:scaleX(0.9);transform-origin:right center;">-3.0</div>
<div style="position:absolute;right:932.5px;top:459.56px;font-size:8.40px;line-height:8.40px;color:#5A5AF5;white-space:nowrap;text-align:right;transform-origin:right center;-webkit-text-stroke:0.1px currentColor;transform:scaleX(0.9);transform-origin:right center;">-4.0</div>
<div style="position:absolute;right:932.5px;top:475.80px;font-size:8.40px;line-height:8.40px;color:#5A5AF5;white-space:nowrap;text-align:right;transform-origin:right center;-webkit-text-stroke:0.1px currentColor;transform:scaleX(0.9);transform-origin:right center;">-5.0</div>
<div style="position:absolute;left:8.399999999999999px;top:485.00px;width:40px;text-align:center;font-size:8.40px;line-height:8.40px;color:#2A2A2A;white-space:nowrap;-webkit-text-stroke:0;transform:scaleX(0.93);">-34.02</div>
<div style="position:absolute;left:52.14px;top:485.00px;width:40px;text-align:center;font-size:8.40px;line-height:8.40px;color:#2A2A2A;white-space:nowrap;-webkit-text-stroke:0;transform:scaleX(0.93);">-24.26</div>
<div style="position:absolute;left:95.88px;top:485.00px;width:40px;text-align:center;font-size:8.40px;line-height:8.40px;color:#2A2A2A;white-space:nowrap;-webkit-text-stroke:0;transform:scaleX(0.93);">-14.49</div>
<div style="position:absolute;left:139.62px;top:485.00px;width:40px;text-align:center;font-size:8.40px;line-height:8.40px;color:#2A2A2A;white-space:nowrap;-webkit-text-stroke:0;transform:scaleX(0.93);">-4.727</div>
<div style="position:absolute;left:183.36px;top:485.00px;width:40px;text-align:center;font-size:8.40px;line-height:8.40px;color:#2A2A2A;white-space:nowrap;-webkit-text-stroke:0;transform:scaleX(0.93);">5.038</div>
<div style="position:absolute;left:227.1px;top:485.00px;width:40px;text-align:center;font-size:8.40px;line-height:8.40px;color:#2A2A2A;white-space:nowrap;-webkit-text-stroke:0;transform:scaleX(0.93);">14.8</div>
<div style="position:absolute;left:270.84px;top:485.00px;width:40px;text-align:center;font-size:8.40px;line-height:8.40px;color:#2A2A2A;white-space:nowrap;-webkit-text-stroke:0;transform:scaleX(0.93);">24.57</div>
<div style="position:absolute;left:314.58px;top:485.00px;width:40px;text-align:center;font-size:8.40px;line-height:8.40px;color:#2A2A2A;white-space:nowrap;-webkit-text-stroke:0;transform:scaleX(0.93);">34.34</div>
<div style="position:absolute;left:358.32px;top:485.00px;width:40px;text-align:center;font-size:8.40px;line-height:8.40px;color:#2A2A2A;white-space:nowrap;-webkit-text-stroke:0;transform:scaleX(0.93);">44.1</div>
<div style="position:absolute;left:6px;top:496px;width:21px;height:8px;background:#7C7CF6;"></div>
<div style="position:absolute;left:6.0px;top:496.70px;width:21px;text-align:center;font-size:7.06px;line-height:7.06px;color:#D8D8FF;white-space:nowrap;transform:scaleX(0.893);-webkit-text-stroke:0;">x1.0</div>
<div style="position:absolute;left:30px;top:496.14px;font-size:8.40px;line-height:8.40px;color:#222;white-space:nowrap;transform:scaleX(0.893);transform-origin:left center;">μs</div>
<div style="position:absolute;left:3px;top:505.5px;width:472.5px;height:10.0px;background:linear-gradient(#EDE6D8,#FBF9F4);"></div>
<div style="position:absolute;left:4.5px;top:505.5px;width:9.5px;height:10.0px;border:1px solid #B5A997;border-radius:2px;background:linear-gradient(#F6F3EC,#E8E1D2);"></div>
<svg style="position:absolute;left:7px;top:508.0px" width="5" height="6" viewBox="0 0 5 6"><path d="M4 0.5L1.2 3L4 5.5" fill="none" stroke="#707070" stroke-width="0.9"/></svg>
<div style="position:absolute;left:466.0px;top:505.5px;width:9.5px;height:10.0px;border:1px solid #B5A997;border-radius:2px;background:linear-gradient(#F6F3EC,#E8E1D2);"></div>
<svg style="position:absolute;left:468.5px;top:508.0px" width="5" height="6" viewBox="0 0 5 6"><path d="M1 0.5L3.8 3L1 5.5" fill="none" stroke="#707070" stroke-width="0.9"/></svg>
<div style="position:absolute;left:147px;top:505.5px;width:9px;height:10.0px;border:1px solid #A89B88;border-radius:2px;background:linear-gradient(#FBFAF6,#EEE8DC);"></div>
<svg style="position:absolute;left:149.0px;top:508.0px" width="5" height="5" viewBox="0 0 5 5"><path d="M1 0V5M2.5 0V5M4 0V5" stroke="#9A8E7C" stroke-width="0.8"/></svg>
<div style="position:absolute;left:410px;top:466.4px;width:65.5px;height:38.900000000000034px;border:1.5px solid #A8A8A8;background:#fff;"></div>
<div style="position:absolute;left:410px;top:466.4px;width:65.5px;height:11.5px;background:#A4A4A4;"></div>
<div style="position:absolute;left:412.2px;top:468.59999999999997px;width:43.5px;overflow:hidden;font-size:8px;line-height:8px;color:#fff;white-space:nowrap;">Zoom Overview</div>
<div style="position:absolute;left:456.5px;top:473.59999999999997px;width:5px;height:1.8px;background:#fff;"></div>
<svg style="position:absolute;left:466.5px;top:468.9px" width="6.5" height="6.5" viewBox="0 0 6.5 6.5"><path d="M0.5 0.5L6 6M6 0.5L0.5 6" stroke="#fff" stroke-width="1.2"/></svg>
<svg style="position:absolute;left:0;top:0" width="960" height="540"><path d="M419.0 484.5V501M423.2 484.5V501M427.3 484.5V501M431.5 484.5V501M435.7 484.5V501M439.8 484.5V501M444.0 484.5V501M448.2 484.5V501M452.3 484.5V501M456.5 484.5V501M460.7 484.5V501M464.8 484.5V501M469.0 484.5V501M419 484.5H469M419 490.0H469M419 495.5H469M419 501.0H469" stroke="#A8D8E8" stroke-width="0.9" stroke-dasharray="1.1 1.1" fill="none"/><path d="M419 495.0H424.5" stroke="#5050F0" stroke-width="1"/><rect x="424.5" y="487.7" width="42.5" height="7.6" fill="#0000FF"/><path d="M433.5 485.5V501.5" stroke="#6A6A6A" stroke-width="1"/><path d="M428.5 491.5H438.5" stroke="#8A8AD8" stroke-width="1"/><circle cx="433.5" cy="491.0" r="1.3" fill="#D8C820"/></svg>
<svg style="position:absolute;left:0;top:0" width="960" height="540" viewBox="0 0 960 540"><path d="M508.75 317.5V480.5M551.42 317.5V480.5M594.10 317.5V480.5M636.77 317.5V480.5M679.45 317.5V480.5M722.12 317.5V480.5M764.80 317.5V480.5M807.48 317.5V480.5M850.15 317.5V480.5M892.83 317.5V480.5M935.50 317.5V480.5M508.75 317.50H935.5M508.75 333.80H935.5M508.75 350.10H935.5M508.75 366.40H935.5M508.75 382.70H935.5M508.75 399.00H935.5M508.75 415.30H935.5M508.75 431.60H935.5M508.75 447.90H935.5M508.75 464.20H935.5M508.75 480.50H935.5" stroke="#B6DDEA" stroke-width="1" stroke-dasharray="2 1.8" fill="none"/></svg>
<div style="position:absolute;left:485px;top:316px;width:6px;height:6px;background:#0000F0;border:1px solid #000060;"></div>
<div style="position:absolute;right:452px;top:312.90px;font-size:8.40px;line-height:8.40px;color:#5A5AF5;white-space:nowrap;text-align:right;transform-origin:right center;-webkit-text-stroke:0.1px currentColor;transform:scaleX(0.9);transform-origin:right center;">2.17</div>
<div style="position:absolute;right:452px;top:324.40px;font-size:8.40px;line-height:8.40px;color:#5A5AF5;white-space:nowrap;text-align:right;transform-origin:right center;-webkit-text-stroke:0.1px currentColor;transform:scaleX(0.9);transform-origin:right center;">V</div>
<div style="position:absolute;right:452px;top:345.50px;font-size:8.40px;line-height:8.40px;color:#5A5AF5;white-space:nowrap;text-align:right;transform-origin:right center;-webkit-text-stroke:0.1px currentColor;transform:scaleX(0.9);transform-origin:right center;">1.302</div>
<div style="position:absolute;right:452px;top:361.80px;font-size:8.40px;line-height:8.40px;color:#5A5AF5;white-space:nowrap;text-align:right;transform-origin:right center;-webkit-text-stroke:0.1px currentColor;transform:scaleX(0.9);transform-origin:right center;">0.868</div>
<div style="position:absolute;right:452px;top:378.10px;font-size:8.40px;line-height:8.40px;color:#5A5AF5;white-space:nowrap;text-align:right;transform-origin:right center;-webkit-text-stroke:0.1px currentColor;transform:scaleX(0.9);transform-origin:right center;">0.434</div>
<div style="position:absolute;right:452px;top:394.40px;font-size:8.40px;line-height:8.40px;color:#5A5AF5;white-space:nowrap;text-align:right;transform-origin:right center;-webkit-text-stroke:0.1px currentColor;transform:scaleX(0.9);transform-origin:right center;">0.0</div>
<div style="position:absolute;right:452px;top:410.70px;font-size:8.40px;line-height:8.40px;color:#5A5AF5;white-space:nowrap;text-align:right;transform-origin:right center;-webkit-text-stroke:0.1px currentColor;transform:scaleX(0.9);transform-origin:right center;">-0.434</div>
<div style="position:absolute;right:452px;top:427.00px;font-size:8.40px;line-height:8.40px;color:#5A5AF5;white-space:nowrap;text-align:right;transform-origin:right center;-webkit-text-stroke:0.1px currentColor;transform:scaleX(0.9);transform-origin:right center;">-0.868</div>
<div style="position:absolute;right:452px;top:443.30px;font-size:8.40px;line-height:8.40px;color:#5A5AF5;white-space:nowrap;text-align:right;transform-origin:right center;-webkit-text-stroke:0.1px currentColor;transform:scaleX(0.9);transform-origin:right center;">-1.302</div>
<div style="position:absolute;right:452px;top:459.60px;font-size:8.40px;line-height:8.40px;color:#5A5AF5;white-space:nowrap;text-align:right;transform-origin:right center;-webkit-text-stroke:0.1px currentColor;transform:scaleX(0.9);transform-origin:right center;">-1.736</div>
<div style="position:absolute;right:452px;top:475.90px;font-size:8.40px;line-height:8.40px;color:#5A5AF5;white-space:nowrap;text-align:right;transform-origin:right center;-webkit-text-stroke:0.1px currentColor;transform:scaleX(0.9);transform-origin:right center;">-2.17</div>
<div style="position:absolute;left:488.75px;top:485.00px;width:40px;text-align:center;font-size:8.40px;line-height:8.40px;color:#2A2A2A;white-space:nowrap;-webkit-text-stroke:0;transform:scaleX(0.93);">743.0</div>
<div style="position:absolute;left:531.425px;top:485.00px;width:40px;text-align:center;font-size:8.40px;line-height:8.40px;color:#2A2A2A;white-space:nowrap;-webkit-text-stroke:0;transform:scaleX(0.93);">744.3</div>
<div style="position:absolute;left:574.1px;top:485.00px;width:40px;text-align:center;font-size:8.40px;line-height:8.40px;color:#2A2A2A;white-space:nowrap;-webkit-text-stroke:0;transform:scaleX(0.93);">745.7</div>
<div style="position:absolute;left:616.775px;top:485.00px;width:40px;text-align:center;font-size:8.40px;line-height:8.40px;color:#2A2A2A;white-space:nowrap;-webkit-text-stroke:0;transform:scaleX(0.93);">747.0</div>
<div style="position:absolute;left:659.45px;top:485.00px;width:40px;text-align:center;font-size:8.40px;line-height:8.40px;color:#2A2A2A;white-space:nowrap;-webkit-text-stroke:0;transform:scaleX(0.93);">748.4</div>
<div style="position:absolute;left:702.125px;top:485.00px;width:40px;text-align:center;font-size:8.40px;line-height:8.40px;color:#2A2A2A;white-space:nowrap;-webkit-text-stroke:0;transform:scaleX(0.93);">749.7</div>
<div style="position:absolute;left:744.8px;top:485.00px;width:40px;text-align:center;font-size:8.40px;line-height:8.40px;color:#2A2A2A;white-space:nowrap;-webkit-text-stroke:0;transform:scaleX(0.93);">751.0</div>
<div style="position:absolute;left:787.475px;top:485.00px;width:40px;text-align:center;font-size:8.40px;line-height:8.40px;color:#2A2A2A;white-space:nowrap;-webkit-text-stroke:0;transform:scaleX(0.93);">752.4</div>
<div style="position:absolute;left:830.15px;top:485.00px;width:40px;text-align:center;font-size:8.40px;line-height:8.40px;color:#2A2A2A;white-space:nowrap;-webkit-text-stroke:0;transform:scaleX(0.93);">753.7</div>
<div style="position:absolute;left:486px;top:496px;width:21px;height:8px;background:#7C7CF6;"></div>
<div style="position:absolute;left:486.0px;top:496.70px;width:21px;text-align:center;font-size:7.06px;line-height:7.06px;color:#D8D8FF;white-space:nowrap;transform:scaleX(0.893);-webkit-text-stroke:0;">x1.0</div>
<div style="position:absolute;left:510px;top:496.14px;font-size:8.40px;line-height:8.40px;color:#222;white-space:nowrap;transform:scaleX(0.893);transform-origin:left center;">μs</div>
<div style="position:absolute;left:483px;top:506.5px;width:463px;height:9.0px;background:linear-gradient(#EDE6D8,#FBF9F4);"></div>
<div style="position:absolute;left:484.5px;top:506.5px;width:9.5px;height:9.0px;border:1px solid #B5A997;border-radius:2px;background:linear-gradient(#F6F3EC,#E8E1D2);"></div>
<svg style="position:absolute;left:487px;top:509.0px" width="5" height="6" viewBox="0 0 5 6"><path d="M4 0.5L1.2 3L4 5.5" fill="none" stroke="#707070" stroke-width="0.9"/></svg>
<div style="position:absolute;left:936.5px;top:506.5px;width:9.5px;height:9.0px;border:1px solid #B5A997;border-radius:2px;background:linear-gradient(#F6F3EC,#E8E1D2);"></div>
<svg style="position:absolute;left:939px;top:509.0px" width="5" height="6" viewBox="0 0 5 6"><path d="M1 0.5L3.8 3L1 5.5" fill="none" stroke="#707070" stroke-width="0.9"/></svg>
<div style="position:absolute;left:628px;top:506.5px;width:8px;height:9.0px;border:1px solid #A89B88;border-radius:2px;background:linear-gradient(#FBFAF6,#EEE8DC);"></div>
<svg style="position:absolute;left:629.5px;top:509.0px" width="5" height="5" viewBox="0 0 5 5"><path d="M1 0V5M2.5 0V5M4 0V5" stroke="#9A8E7C" stroke-width="0.8"/></svg>
<div style="position:absolute;left:870.6px;top:468.9px;width:74.39999999999998px;height:36.700000000000045px;border:1.5px solid #A8A8A8;background:#fff;"></div>
<div style="position:absolute;left:870.6px;top:468.9px;width:74.39999999999998px;height:11.5px;background:#A4A4A4;"></div>
<div style="position:absolute;left:872.8000000000001px;top:471.09999999999997px;width:52.39999999999998px;overflow:hidden;font-size:8px;line-height:8px;color:#fff;white-space:nowrap;">Zoom Overview</div>
<div style="position:absolute;left:926px;top:476.09999999999997px;width:5px;height:1.8px;background:#fff;"></div>
<svg style="position:absolute;left:936px;top:471.4px" width="6.5" height="6.5" viewBox="0 0 6.5 6.5"><path d="M0.5 0.5L6 6M6 0.5L0.5 6" stroke="#fff" stroke-width="1.2"/></svg>
<svg style="position:absolute;left:0;top:0" width="960" height="540"><path d="M878.0 487V501M882.9 487V501M887.8 487V501M892.8 487V501M897.7 487V501M902.6 487V501M907.5 487V501M912.4 487V501M917.3 487V501M922.2 487V501M927.2 487V501M932.1 487V501M937.0 487V501M878 487.0H937M878 491.7H937M878 496.3H937M878 501.0H937" stroke="#A8D8E8" stroke-width="0.9" stroke-dasharray="1.1 1.1" fill="none"/><path d="M878 498.7H885.8" stroke="#5050F0" stroke-width="1"/><rect x="885.8" y="492" width="51.2" height="7.0" fill="#0000FF"/><path d="M896.7 488V501.5" stroke="#6A6A6A" stroke-width="1"/><path d="M891.7 495.5H901.7" stroke="#8A8AD8" stroke-width="1"/><circle cx="896.7" cy="495.0" r="1.3" fill="#D8C820"/></svg>
<svg style="position:absolute;left:0;top:0" width="960" height="540" viewBox="0 0 960 540"><path d="M28.4 211.6 L45 212.4 L60 213 L75 213.2 L82.5 212.9" fill="none" stroke="#0000FF" stroke-width="1.6"/><path d="M82.2 213.8 L83 184 L84 182.3 L85 183 L86 206 L84.5 210 Z" fill="#0000FF"/><path d="M85.2 206.0 L85.5 126.5 L86.5 126.0 L125.3 126.0 L125.8 122.0 L127.0 121.4 L145.3 121.4 L146.9 122.0 L147.3 126.0 L199.0 126.0 L199.5 122.0 L200.7 121.4 L218.8 121.4 L220.4 122.0 L220.8 126.0 L272.7 126.0 L273.2 122.0 L274.4 121.4 L292.4 121.4 L294.0 122.0 L294.4 126.0 L346.3 126.0 L346.8 122.0 L348.0 121.4 L365.8 121.4 L367.4 122.0 L367.8 126.0 L419.7 126.0 L420.2 122.0 L421.4 121.4 L439.3 121.4 L440.9 122.0 L441.3 126.0 L465.0 126.2 L465.5 206.0 L465.5 205.5 L455.3 205.3 L453.1 211.5 L451.1 205.3 L381.8 205.3 L379.6 211.5 L377.6 205.3 L308.2 205.3 L306.0 211.5 L304.0 205.3 L234.4 205.3 L232.2 211.5 L230.2 205.3 L161.2 205.3 L159.0 211.5 L157.0 205.3 L90.0 205.6 L88.0 206.3 L86.5 208.0 L85.2 208.0Z" fill="#0000FF"/><path d="M157.4 125.5 L159.1 125.5 L158.9 180 L158.2 183 L157.6 180Z" fill="#fff"/><path d="M230.6 125.5 L232.3 125.5 L232.1 180 L231.4 183 L230.8 180Z" fill="#fff"/><path d="M304.4 125.5 L306.1 125.5 L305.9 180 L305.2 183 L304.6 180Z" fill="#fff"/><path d="M378.0 125.5 L379.7 125.5 L379.5 180 L378.8 183 L378.2 180Z" fill="#fff"/><path d="M451.5 125.5 L453.2 125.5 L453.0 180 L452.3 183 L451.7 180Z" fill="#fff"/><path d="M157 160.5L159.3 158L161 158.3L162.6 160.4L161 162L157.6 162Z" fill="#F8EA10"/><rect x="157" y="162.9" width="3" height="1.3" fill="#F8EA10"/><rect x="25.2" y="260.8" width="5.6" height="5.6" fill="#fff" stroke="#222" stroke-width="0.9"/><circle cx="465.5" cy="264" r="3.6" fill="#0E7C7B" stroke="#064848" stroke-width="0.6"/></svg>
<svg style="position:absolute;left:0;top:0" width="960" height="540" viewBox="0 0 960 540"><path d="M509.5 178.3 L530 178 L553 177.3" fill="none" stroke="#1010E8" stroke-width="1.4"/><path d="M510 178V203.5M517.8 178V203.5M524.9 178V203.5M532.2 178V203.5M539.3 178V203.5M546 178V203.5M552.7 178V203.5" stroke="#1010E8" stroke-width="1.1"/><path d="M553.00 176.50H556.04V163.00H553.00ZM553.64 167.00H558.04V152.00H553.64ZM555.75 156.00H560.04V143.50H555.75ZM557.85 147.00H561.95V136.00H557.85ZM560.04 139.00H563.45V130.00H560.04ZM562.45 133.00H565.14V124.80H562.45ZM565.50 176.50H570.00V163.00H565.50ZM567.60 167.00H572.00V152.00H567.60ZM569.70 156.00H574.00V143.50H569.70ZM571.80 147.00H575.90V136.00H571.80ZM574.00 139.00H577.40V130.00H574.00ZM576.40 133.00H579.10V124.80H576.40ZM579.46 176.50H583.96V163.00H579.46ZM581.56 167.00H585.96V152.00H581.56ZM583.66 156.00H587.96V143.50H583.66ZM585.76 147.00H589.86V136.00H585.76ZM587.96 139.00H591.36V130.00H587.96ZM590.36 133.00H593.06V124.80H590.36ZM593.41 176.50H597.91V163.00H593.41ZM595.51 167.00H599.91V152.00H595.51ZM597.61 156.00H601.91V143.50H597.61ZM599.71 147.00H603.81V136.00H599.71ZM601.91 139.00H605.31V130.00H601.91ZM604.31 133.00H607.01V124.80H604.31ZM607.37 176.50H611.87V163.00H607.37ZM609.47 167.00H613.87V152.00H609.47ZM611.57 156.00H615.87V143.50H611.57ZM613.67 147.00H617.77V136.00H613.67ZM615.87 139.00H619.27V130.00H615.87ZM618.27 133.00H620.97V124.80H618.27ZM621.32 176.50H625.82V163.00H621.32ZM623.42 167.00H627.82V152.00H623.42ZM625.52 156.00H629.82V143.50H625.52ZM627.62 147.00H631.72V136.00H627.62ZM629.82 139.00H633.22V130.00H629.82ZM632.22 133.00H634.92V124.80H632.22ZM635.27 176.50H639.77V163.00H635.27ZM637.38 167.00H641.77V152.00H637.38ZM639.48 156.00H643.77V143.50H639.48ZM641.58 147.00H645.68V136.00H641.58ZM643.77 139.00H647.18V130.00H643.77ZM646.18 133.00H648.88V124.80H646.18ZM649.23 176.50H653.73V163.00H649.23ZM651.33 167.00H655.73V152.00H651.33ZM653.43 156.00H657.73V143.50H653.43ZM655.53 147.00H659.63V136.00H655.53ZM657.73 139.00H661.13V130.00H657.73ZM660.13 133.00H662.83V124.80H660.13ZM663.18 176.50H667.68V163.00H663.18ZM665.28 167.00H669.68V152.00H665.28ZM667.38 156.00H671.68V143.50H667.38ZM669.49 147.00H673.59V136.00H669.49ZM671.68 139.00H675.09V130.00H671.68ZM674.09 133.00H676.78V124.80H674.09ZM677.14 176.50H681.64V163.00H677.14ZM679.24 167.00H683.64V152.00H679.24ZM681.34 156.00H685.64V143.50H681.34ZM683.44 147.00H687.54V136.00H683.44ZM685.64 139.00H689.04V130.00H685.64ZM688.04 133.00H690.74V124.80H688.04ZM691.10 176.50H695.60V163.00H691.10ZM693.20 167.00H697.60V152.00H693.20ZM695.30 156.00H699.60V143.50H695.30ZM697.40 147.00H701.50V136.00H697.40ZM699.60 139.00H703.00V130.00H699.60ZM702.00 133.00H704.70V124.80H702.00ZM705.05 176.50H709.55V163.00H705.05ZM707.15 167.00H711.55V152.00H707.15ZM709.25 156.00H713.55V143.50H709.25ZM711.35 147.00H715.45V136.00H711.35ZM713.55 139.00H716.95V130.00H713.55ZM715.95 133.00H718.65V124.80H715.95ZM719.00 176.50H723.50V163.00H719.00ZM721.11 167.00H725.50V152.00H721.11ZM723.21 156.00H727.50V143.50H723.21ZM725.31 147.00H729.41V136.00H725.31ZM727.50 139.00H730.91V130.00H727.50ZM729.91 133.00H732.61V124.80H729.91ZM732.96 176.50H737.46V163.00H732.96ZM735.06 167.00H739.46V152.00H735.06ZM737.16 156.00H741.46V143.50H737.16ZM739.26 147.00H743.36V136.00H739.26ZM741.46 139.00H744.86V130.00H741.46ZM743.86 133.00H746.56V124.80H743.86ZM746.91 176.50H751.41V163.00H746.91ZM749.01 167.00H753.41V152.00H749.01ZM751.12 156.00H755.41V143.50H751.12ZM753.22 147.00H757.32V136.00H753.22ZM755.41 139.00H758.82V130.00H755.41ZM757.82 133.00H760.51V124.80H757.82ZM760.87 176.50H765.37V163.00H760.87ZM762.97 167.00H767.37V152.00H762.97ZM765.07 156.00H769.37V143.50H765.07ZM767.17 147.00H771.27V136.00H767.17ZM769.37 139.00H772.77V130.00H769.37ZM771.77 133.00H774.47V124.80H771.77ZM774.83 176.50H779.33V163.00H774.83ZM776.93 167.00H781.33V152.00H776.93ZM779.03 156.00H783.33V143.50H779.03ZM781.13 147.00H785.23V136.00H781.13ZM783.33 139.00H786.73V130.00H783.33ZM785.73 133.00H788.43V124.80H785.73ZM788.78 176.50H793.28V163.00H788.78ZM790.88 167.00H795.28V152.00H790.88ZM792.98 156.00H797.28V143.50H792.98ZM795.08 147.00H799.18V136.00H795.08ZM797.28 139.00H800.68V130.00H797.28ZM799.68 133.00H802.38V124.80H799.68ZM802.74 176.50H807.24V163.00H802.74ZM804.84 167.00H809.24V152.00H804.84ZM806.94 156.00H811.24V143.50H806.94ZM809.04 147.00H813.14V136.00H809.04ZM811.24 139.00H814.64V130.00H811.24ZM813.64 133.00H816.34V124.80H813.64ZM816.69 176.50H821.19V163.00H816.69ZM818.79 167.00H823.19V152.00H818.79ZM820.89 156.00H825.19V143.50H820.89ZM822.99 147.00H827.09V136.00H822.99ZM825.19 139.00H828.59V130.00H825.19ZM827.59 133.00H830.29V124.80H827.59ZM830.64 176.50H835.14V163.00H830.64ZM832.75 167.00H837.14V152.00H832.75ZM834.85 156.00H839.14V143.50H834.85ZM836.95 147.00H841.05V136.00H836.95ZM839.14 139.00H842.55V130.00H839.14ZM841.55 133.00H844.25V124.80H841.55ZM844.60 176.50H849.10V163.00H844.60ZM846.70 167.00H851.10V152.00H846.70ZM848.80 156.00H853.10V143.50H848.80ZM850.90 147.00H855.00V136.00H850.90ZM853.10 139.00H856.50V130.00H853.10ZM855.50 133.00H858.20V124.80H855.50ZM858.56 176.50H863.06V163.00H858.56ZM860.66 167.00H865.06V152.00H860.66ZM862.76 156.00H867.06V143.50H862.76ZM864.86 147.00H868.96V136.00H864.86ZM867.06 139.00H870.46V130.00H867.06ZM869.46 133.00H872.16V124.80H869.46ZM872.51 176.50H877.01V163.00H872.51ZM874.61 167.00H879.01V152.00H874.61ZM876.71 156.00H881.01V143.50H876.71ZM878.81 147.00H882.91V136.00H878.81ZM881.01 139.00H884.41V130.00H881.01ZM883.41 133.00H886.11V124.80H883.41ZM886.46 176.50H890.96V163.00H886.46ZM888.56 167.00H892.96V152.00H888.56ZM890.66 156.00H894.96V143.50H890.66ZM892.76 147.00H896.87V136.00H892.76ZM894.96 139.00H898.37V130.00H894.96ZM897.37 133.00H900.06V124.80H897.37ZM900.42 176.50H904.92V163.00H900.42ZM902.52 167.00H906.92V152.00H902.52ZM904.62 156.00H908.92V143.50H904.62ZM906.72 147.00H910.82V136.00H906.72ZM908.92 139.00H912.32V130.00H908.92ZM911.32 133.00H914.02V124.80H911.32ZM914.38 176.50H918.88V163.00H914.38ZM916.48 167.00H920.88V152.00H916.48ZM918.58 156.00H922.88V143.50H918.58ZM920.68 147.00H924.78V136.00H920.68ZM922.88 139.00H926.28V130.00H922.88ZM925.28 133.00H927.98V124.80H925.28ZM928.33 176.50H932.83V163.00H928.33ZM930.43 167.00H934.83V152.00H930.43ZM932.53 156.00H936.83V143.50H932.53ZM934.63 147.00H938.73V136.00H934.63ZM936.83 139.00H940.23V130.00H936.83ZM939.23 133.00H941.93V124.80H939.23ZM942.29 176.50H945.30V163.00H942.29ZM944.39 167.00H945.30V152.00H944.39Z" fill="#0000FF"/><path d="M565.30 124.5V198.5L566.10 176M579.26 124.5V198.5L580.06 176M593.21 124.5V198.5L594.01 176M607.17 124.5V198.5L607.97 176M621.12 124.5V198.5L621.92 176M635.08 124.5V198.5L635.88 176M649.03 124.5V198.5L649.83 176M662.99 124.5V198.5L663.78 176M676.94 124.5V198.5L677.74 176M690.90 124.5V198.5L691.70 176M704.85 124.5V198.5L705.65 176M718.81 124.5V198.5L719.61 176M732.76 124.5V198.5L733.56 176M746.72 124.5V198.5L747.51 176M760.67 124.5V198.5L761.47 176M774.63 124.5V198.5L775.43 176M788.58 124.5V198.5L789.38 176M802.54 124.5V198.5L803.34 176M816.49 124.5V198.5L817.29 176M830.45 124.5V198.5L831.25 176M844.40 124.5V198.5L845.20 176M858.36 124.5V198.5L859.16 176M872.31 124.5V198.5L873.11 176M886.26 124.5V198.5L887.06 176M900.22 124.5V198.5L901.02 176M914.18 124.5V198.5L914.98 176M928.13 124.5V198.5L928.93 176M942.09 124.5V198.5L942.89 176" stroke="#5858F4" stroke-width="1.2" fill="none"/><path d="M557 155L560.5 158.5L557 162L553.5 158.5Z" fill="#F0E020" stroke="#B8A800" stroke-width="0.5"/><rect x="505.8" y="250.8" width="5.6" height="5.6" fill="#fff" stroke="#222" stroke-width="0.9"/></svg>
<svg style="position:absolute;left:0;top:0" width="960" height="540" viewBox="0 0 960 540"><path d="M28.4 403.7 L60.3 403.7 L60.8 428 L80.5 428 L82.5 404 L106 403.7" fill="none" stroke="#3030F0" stroke-width="1.2"/><path d="M328 362.4 L337 362.6 L339 402 L344.5 402 L345.3 427 L365 427 L367.5 402.5 L392.5 402.5" fill="none" stroke="#3030F0" stroke-width="1.2"/><path d="M82.9 405.2 L83.2 391 L86.8 391 L88.5 395 L90.2 391 L93.3 391 L94.5 404.5Z" fill="#0000F0"/><path d="M94 403.7H106" stroke="#3030F0" stroke-width="1.2"/><path d="M367.8 404.8 L368.2 390.8 L371.8 390.8 L373.5 394.8 L375.2 390.8 L378.8 390.8 L380 404.2Z" fill="#0000F0"/><path d="M106.0 392.3 L107.3 392.0 L108.6 392.8 L109.9 391.9 L111.2 392.7 L112.5 392.4 L113.8 391.9 L115.1 392.6 L116.4 391.9 L117.7 392.5 L119.0 391.9 L120.3 391.9 L121.6 392.5 L122.9 393.1 L124.2 392.0 L125.5 392.2 L126.8 392.8 L128.1 393.3 L129.4 392.7 L130.7 392.4 L132.0 393.4 L133.3 391.9 L134.6 393.2 L135.9 392.3 L137.2 392.0 L138.5 392.0 L139.8 392.3 L141.1 393.1 L142.4 392.1 L143.3 392.6 L143.3 404.1 L142.0 404.0 L140.7 404.4 L139.4 404.1 L138.1 404.9 L136.8 404.9 L135.5 404.7 L134.2 403.9 L132.9 404.3 L131.6 404.5 L130.3 404.1 L129.0 404.3 L127.7 404.5 L126.4 403.7 L125.1 403.9 L123.8 404.6 L122.5 404.1 L121.2 404.2 L119.9 403.6 L118.6 403.8 L117.3 404.5 L116.0 403.4 L114.7 404.8 L113.4 404.3 L112.1 403.8 L110.8 404.8 L109.5 404.2 L108.2 404.9 L106.9 403.9 L106.0 404.2Z" fill="#0000FF"/><path d="M107.5 400.0v3.5M110.9 400.9v2.6M114.0 393.3v3.2M117.3 393.3v3.9M120.5 401.4v2.1M123.6 399.5v4.0M126.2 400.7v2.8M128.4 393.3v2.9M130.8 401.4v2.1M133.1 393.3v2.5M136.6 393.3v2.2M139.5 399.7v3.8" stroke="#9090FA" stroke-width="0.6"/><path d="M143.3 384.9 L144.6 385.2 L145.9 385.1 L147.2 385.9 L148.5 386.0 L149.8 384.7 L151.1 384.8 L152.4 384.9 L153.7 384.9 L155.0 385.3 L156.3 385.4 L157.6 384.9 L158.9 384.5 L160.2 385.2 L161.5 385.1 L162.8 385.4 L164.1 386.0 L165.4 385.6 L166.7 385.3 L168.0 385.5 L169.3 385.6 L170.6 384.6 L171.9 385.9 L173.2 385.7 L174.5 385.9 L175.8 385.8 L177.1 385.1 L178.4 385.1 L179.7 384.7 L180.0 385.3 L180.0 397.3 L178.7 398.2 L177.4 398.2 L176.1 398.0 L174.8 398.0 L173.5 397.8 L172.2 398.2 L170.9 398.3 L169.6 398.1 L168.3 398.1 L167.0 397.7 L165.7 398.3 L164.4 396.9 L163.1 397.3 L161.8 398.1 L160.5 397.9 L159.2 397.7 L157.9 397.7 L156.6 398.1 L155.3 396.9 L154.0 396.7 L152.7 397.6 L151.4 397.5 L150.1 398.2 L148.8 398.1 L147.5 397.8 L146.2 397.9 L144.9 397.0 L143.6 398.0 L143.3 397.5Z" fill="#0000FF"/><path d="M144.8 394.8v2.0M147.7 394.5v2.3M150.0 393.7v3.1M153.4 386.0v3.4M156.1 394.5v2.3M159.0 386.0v3.6M161.6 393.2v3.6M165.0 393.2v3.6M168.2 394.3v2.5M170.9 386.0v2.1M173.5 394.3v2.5M177.0 393.9v2.9" stroke="#9090FA" stroke-width="0.6"/><path d="M180.0 379.0 L181.3 378.1 L182.6 377.9 L183.9 377.9 L185.2 377.8 L186.5 377.8 L187.8 378.5 L189.1 378.9 L190.4 378.8 L191.7 378.3 L193.0 378.5 L194.3 378.8 L195.6 377.6 L196.9 378.6 L198.2 379.0 L199.5 378.8 L200.8 378.7 L202.1 378.3 L203.4 377.8 L204.7 378.8 L206.0 378.0 L207.3 378.8 L208.6 379.1 L209.9 378.1 L211.2 378.1 L212.5 379.0 L213.8 378.7 L215.1 377.8 L216.4 377.7 L217.0 378.3 L217.0 391.1 L215.7 389.9 L214.4 390.0 L213.1 391.1 L211.8 390.0 L210.5 389.7 L209.2 390.2 L207.9 390.7 L206.6 390.4 L205.3 391.1 L204.0 391.3 L202.7 389.7 L201.4 390.3 L200.1 390.5 L198.8 389.8 L197.5 390.6 L196.2 389.9 L194.9 390.0 L193.6 391.0 L192.3 390.9 L191.0 390.8 L189.7 390.9 L188.4 390.4 L187.1 390.9 L185.8 390.6 L184.5 391.1 L183.2 389.8 L181.9 390.7 L180.6 390.6 L180.0 390.5Z" fill="#0000FF"/><path d="M181.5 386.6v3.2M184.3 386.0v3.8M187.2 379.0v3.0M190.0 379.0v2.4M193.4 379.0v2.3M196.6 379.0v3.1M199.5 386.7v3.1M201.9 379.0v3.1M204.4 386.3v3.5M207.4 386.3v3.5M210.3 386.6v3.2M213.2 379.0v3.4" stroke="#9090FA" stroke-width="0.6"/><path d="M217.0 370.3 L218.3 371.0 L219.6 370.6 L220.9 370.9 L222.2 371.0 L223.5 369.9 L224.8 370.4 L226.1 371.0 L227.4 370.8 L228.7 369.7 L230.0 369.7 L231.3 370.2 L232.6 369.6 L233.9 369.9 L235.2 369.6 L236.5 370.6 L237.8 370.8 L239.1 370.9 L240.4 369.7 L241.7 370.6 L243.0 370.6 L244.3 369.7 L245.6 370.9 L246.9 371.0 L248.2 369.9 L249.5 371.0 L250.8 370.1 L252.1 370.3 L253.4 371.1 L253.8 370.3 L253.8 381.7 L252.5 382.7 L251.2 382.3 L249.9 382.2 L248.6 382.5 L247.3 382.7 L246.0 382.5 L244.7 381.8 L243.4 383.0 L242.1 382.1 L240.8 382.3 L239.5 383.0 L238.2 382.5 L236.9 382.0 L235.6 382.2 L234.3 382.9 L233.0 381.4 L231.7 381.7 L230.4 381.4 L229.1 382.8 L227.8 382.6 L226.5 382.9 L225.2 381.8 L223.9 382.6 L222.6 382.8 L221.3 382.3 L220.0 381.5 L218.7 381.7 L217.4 382.6 L217.0 382.2Z" fill="#0000FF"/><path d="M218.5 379.2v2.3M221.5 371.0v3.4M223.8 371.0v3.4M226.1 377.6v3.9M229.4 379.3v2.2M231.7 371.0v3.7M234.4 378.4v3.1M236.9 379.2v2.3M239.5 371.0v2.2M241.8 371.0v2.4M244.4 371.0v3.5M247.3 371.0v2.4M249.5 371.0v2.5M252.7 371.0v3.1" stroke="#9090FA" stroke-width="0.6"/><path d="M253.8 362.8 L255.1 361.5 L256.4 362.6 L257.7 362.0 L259.0 362.1 L260.3 362.6 L261.6 361.9 L262.9 362.1 L264.2 362.4 L265.5 362.9 L266.8 361.8 L268.1 362.6 L269.4 362.4 L270.7 362.3 L272.0 361.9 L273.3 361.9 L274.6 361.4 L275.9 361.5 L277.2 361.4 L278.5 362.5 L279.8 361.7 L281.1 361.6 L282.4 361.4 L283.7 362.6 L285.0 362.7 L286.3 362.4 L287.6 361.8 L288.9 361.7 L290.2 361.8 L291.3 362.1 L291.3 374.3 L290.0 374.7 L288.7 374.3 L287.4 374.6 L286.1 373.5 L284.8 373.4 L283.5 374.1 L282.2 374.6 L280.9 373.5 L279.6 374.5 L278.3 374.4 L277.0 375.0 L275.7 374.4 L274.4 374.2 L273.1 374.2 L271.8 374.7 L270.5 374.2 L269.2 375.0 L267.9 374.6 L266.6 374.9 L265.3 374.4 L264.0 374.9 L262.7 375.0 L261.4 374.5 L260.1 374.6 L258.8 374.1 L257.5 374.2 L256.2 373.8 L254.9 373.9 L253.8 374.2Z" fill="#0000FF"/><path d="M255.3 370.1v3.4M258.0 370.8v2.7M260.5 370.1v3.4M262.7 369.8v3.7M265.8 370.0v3.5M268.2 370.5v3.0M271.6 369.9v3.6M274.6 369.7v3.8M277.7 362.8v2.5M280.1 362.8v2.7M283.5 370.4v3.1M286.6 362.8v3.4M288.8 369.9v3.6" stroke="#9090FA" stroke-width="0.6"/><path d="M291.3 354.5 L292.6 354.7 L293.9 353.7 L295.2 354.8 L296.5 354.0 L297.8 353.7 L299.1 354.0 L300.4 354.8 L301.7 353.9 L303.0 354.8 L304.3 355.2 L305.6 354.4 L306.9 354.2 L308.2 354.4 L309.5 354.7 L310.8 354.8 L312.1 354.6 L313.4 354.6 L314.7 353.7 L316.0 353.8 L317.3 354.0 L318.6 354.8 L319.9 354.1 L321.2 354.5 L322.5 353.6 L323.8 353.7 L325.1 354.0 L326.4 354.7 L327.7 354.7 L328.0 354.4 L328.0 365.4 L326.7 366.0 L325.4 365.7 L324.1 365.8 L322.8 365.8 L321.5 366.3 L320.2 365.1 L318.9 366.2 L317.6 364.9 L316.3 365.0 L315.0 366.5 L313.7 365.8 L312.4 365.2 L311.1 365.0 L309.8 365.8 L308.5 366.1 L307.2 366.2 L305.9 365.0 L304.6 366.2 L303.3 365.6 L302.0 366.3 L300.7 365.7 L299.4 365.0 L298.1 366.3 L296.8 365.2 L295.5 365.7 L294.2 365.1 L292.9 365.4 L291.6 366.1 L291.3 365.7Z" fill="#0000FF"/><path d="M292.8 355.1v3.8M295.0 355.1v2.0M297.9 355.1v2.6M300.5 362.4v2.6M302.7 361.5v3.5M305.1 361.1v3.9M308.6 355.1v2.6M311.3 361.0v4.0M314.0 355.1v2.9M316.3 362.8v2.2M318.9 355.1v3.9M321.5 355.1v3.0M324.2 361.1v3.9" stroke="#9090FA" stroke-width="0.6"/><path d="M392.5 391.0 L393.8 391.5 L395.1 391.5 L396.4 390.9 L397.7 391.2 L399.0 390.1 L400.3 391.2 L401.6 390.7 L402.9 391.2 L404.2 391.0 L405.5 390.5 L406.8 390.1 L408.1 391.5 L409.4 390.2 L410.7 390.8 L412.0 390.5 L413.3 390.5 L414.6 391.2 L415.9 391.6 L417.2 390.4 L418.5 391.0 L419.8 390.5 L421.1 390.9 L422.4 390.6 L423.7 390.3 L425.0 390.3 L426.3 390.3 L427.6 391.4 L428.9 390.8 L429.5 390.8 L429.5 402.9 L428.2 401.8 L426.9 401.7 L425.6 402.6 L424.3 403.1 L423.0 403.0 L421.7 403.2 L420.4 402.8 L419.1 403.2 L417.8 402.9 L416.5 402.9 L415.2 402.4 L413.9 401.9 L412.6 402.1 L411.3 402.6 L410.0 402.6 L408.7 402.5 L407.4 402.7 L406.1 402.8 L404.8 403.2 L403.5 402.9 L402.2 401.8 L400.9 403.1 L399.6 402.5 L398.3 402.3 L397.0 401.9 L395.7 403.0 L394.4 402.9 L393.1 402.9 L392.5 402.5Z" fill="#0000FF"/><path d="M394.0 391.5v2.8M397.5 398.1v3.7M399.8 399.7v2.1M403.2 398.9v2.9M405.4 399.0v2.8M408.8 398.1v3.7M411.3 391.5v2.2M414.3 398.4v3.4M417.5 398.5v3.3M420.3 391.5v3.1M423.6 399.3v2.5M426.7 391.5v2.6" stroke="#9090FA" stroke-width="0.6"/><path d="M429.5 384.0 L430.8 384.1 L432.1 383.2 L433.4 383.1 L434.7 383.8 L436.0 383.9 L437.3 383.6 L438.6 383.4 L439.9 384.0 L441.2 383.0 L442.5 383.5 L443.8 383.7 L445.1 384.5 L446.4 384.0 L447.7 384.4 L449.0 383.8 L450.3 383.4 L451.6 383.4 L452.9 384.5 L454.2 384.1 L455.5 383.5 L456.8 383.0 L458.1 383.8 L459.4 384.1 L460.7 383.7 L462.0 383.4 L463.3 384.1 L464.6 384.5 L465.0 383.8 L465.0 395.9 L463.7 396.2 L462.4 395.8 L461.1 395.6 L459.8 395.2 L458.5 396.0 L457.2 395.0 L455.9 395.1 L454.6 395.5 L453.3 396.0 L452.0 394.7 L450.7 395.8 L449.4 395.0 L448.1 395.9 L446.8 395.9 L445.5 395.1 L444.2 395.8 L442.9 394.8 L441.6 395.5 L440.3 396.0 L439.0 395.9 L437.7 395.6 L436.4 395.2 L435.1 394.8 L433.8 396.1 L432.5 395.7 L431.2 396.0 L429.9 394.7 L429.5 395.5Z" fill="#0000FF"/><path d="M431.0 384.5v2.3M433.3 392.0v2.8M436.7 391.3v3.5M440.2 384.5v2.7M443.7 384.5v3.5M446.9 384.5v2.8M449.5 384.5v2.3M452.1 392.1v2.7M454.5 384.5v3.9M457.2 391.2v3.6M460.0 384.5v2.1M462.7 384.5v3.8" stroke="#9090FA" stroke-width="0.6"/><path d="M180 380.5L183.5 384L180 387.5L176.5 384Z" fill="#F0E020" stroke="#B8A800" stroke-width="0.5"/><rect x="25.2" y="477" width="5.6" height="5.6" fill="#fff" stroke="#222" stroke-width="0.9"/></svg>
<svg style="position:absolute;left:0;top:0" width="960" height="540" viewBox="0 0 960 540"><path d="M508.75 457.80 L509.75 458.12 L510.75 458.29 L511.75 458.23 L512.75 457.97 L513.75 457.63 L514.75 457.37 L515.75 457.31 L516.75 457.48 L517.75 457.80 L518.75 458.12 L519.75 458.29 L520.75 458.23 L521.75 457.97 L522.75 457.63 L523.75 457.37 L524.75 457.31 L525.75 457.48 L526.75 457.80 L527.75 458.12 L528.75 458.29 L529.75 458.23 L530.75 457.97 L531.75 457.63 L532.75 457.37 L533.75 457.31 L534.75 457.48 L535.75 457.80 L536.75 458.12 L537.75 458.29 L538.75 458.23 L539.75 457.97 L540.75 457.63 L541.75 457.37 L542.75 457.31 L543.75 457.48 L544.75 457.80 L545.75 458.12 L546.75 458.29 L547.75 458.23 L548.75 457.97 L549.75 457.63 L550.75 457.37 L551.75 457.31 L552.75 457.48 L553.75 457.80 L554.75 458.12 L555.75 458.29 L556.75 458.23 L557.75 457.97 L558.75 457.63 L559.75 457.37 L560.75 457.31 L561.75 457.48 L562.75 457.80 L563.75 458.12 L564.75 458.29 L565.75 458.23 L566.75 457.97 L567.75 457.63 L568.75 457.37 L569.75 457.31 L570.75 457.48 L571.75 457.80 L572.75 458.12 L573.75 458.29 L574.75 458.23 L575.75 457.97 L576.75 457.63 L577.75 457.37 L578.75 457.31 L579.75 457.48 L580.75 457.80 L581.75 458.12 L582.50 457.00 L583.50 440.00 L584.50 420.00 L586.00 409.00 L589.00 405.00 L593.00 403.00 L596.00 402.80 L599.00 404.50 L600.50 406.00 L600.50 404.66 L601.00 402.64 L601.50 399.04 L602.00 394.29 L602.50 388.96 L603.00 383.69 L603.50 379.13 L604.00 375.81 L604.50 374.15 L605.00 374.34 L605.50 376.36 L606.00 379.96 L606.50 384.71 L607.00 390.04 L607.50 395.31 L608.00 399.87 L608.50 403.19 L609.00 404.85 L609.50 404.66 L610.00 402.64 L610.50 399.04 L611.00 394.29 L611.50 388.96 L612.00 383.69 L612.50 379.13 L613.00 375.81 L613.50 374.15 L614.00 374.34 L614.50 376.36 L615.00 379.96 L615.50 384.71 L616.00 390.04 L616.50 395.31 L617.00 399.87 L617.50 403.19 L618.00 404.85 L618.50 404.66 L619.00 402.64 L619.50 399.04 L620.00 394.29 L620.50 388.96 L621.00 383.69 L621.50 379.13 L622.00 375.81 L622.50 374.15 L623.00 374.34 L623.50 376.36 L624.00 379.96 L624.50 384.71 L625.00 390.04 L625.50 395.31 L626.00 399.87 L626.50 403.19 L627.00 404.85 L627.50 404.66 L628.00 402.64 L628.50 399.04 L629.00 394.29 L629.50 388.96 L630.00 383.69 L630.50 379.13 L631.00 375.81 L631.50 374.15 L632.00 374.34 L632.50 376.36 L633.00 379.96 L633.50 384.71 L634.00 390.04 L634.50 395.31 L635.00 399.87 L635.50 403.19 L636.00 404.85 L636.50 404.66 L637.00 402.64 L637.50 399.04 L638.00 394.29 L638.50 388.96 L639.00 383.69 L639.50 379.13 L640.00 375.81 L640.50 374.15 L641.00 374.34 L641.50 376.36 L642.00 379.96 L642.50 384.71 L643.00 390.04 L643.50 395.31 L644.00 399.87 L644.50 403.19 L645.00 404.85 L645.50 404.66 L646.00 402.64 L646.50 399.04 L647.00 394.29 L647.50 388.96 L648.00 383.69 L648.50 379.13 L649.00 375.81 L649.50 374.15 L650.00 374.34 L650.50 376.36 L651.00 379.96 L651.50 384.71 L652.00 390.04 L652.50 395.31 L653.00 399.87 L653.50 403.19 L654.00 404.85 L654.50 404.66 L655.00 402.64 L655.50 399.04 L656.00 394.29 L656.50 388.96 L657.00 383.69 L657.50 379.13 L658.00 375.81 L658.50 374.15 L659.00 374.34 L659.50 376.36 L660.00 379.96 L660.50 384.71 L661.00 390.04 L661.50 395.31 L662.00 399.87 L662.50 403.19 L663.00 404.85 L663.50 404.66 L664.00 402.64 L664.50 399.04 L665.00 394.29 L665.50 388.96 L666.00 383.69 L666.50 379.13 L667.00 375.81 L667.50 374.15 L668.00 374.34 L668.50 376.36 L669.00 379.96 L669.50 384.71 L670.00 390.04 L670.50 395.31 L671.00 399.87 L671.50 403.19 L672.00 404.85 L672.50 404.66 L673.00 402.64 L673.50 399.04 L674.00 394.29 L674.50 388.96 L675.00 383.69 L675.50 379.13 L676.00 375.81 L676.50 374.15 L677.00 374.34 L677.50 376.36 L678.00 379.96 L678.50 384.71 L679.00 390.04 L679.50 395.31 L680.00 399.87 L680.50 403.54 L681.50 404.07 L682.50 404.18 L683.50 403.84 L684.50 403.20 L685.50 402.56 L686.50 402.22 L687.50 402.33 L688.50 402.86 L689.50 403.54 L690.50 404.07 L691.50 404.18 L692.50 403.84 L693.50 403.20 L694.50 402.56 L695.50 402.22 L696.50 402.33 L697.50 402.86 L698.50 403.54 L699.50 404.07 L700.50 404.18 L701.50 403.84 L702.50 403.20 L703.50 402.56 L704.50 402.22 L705.50 402.33 L706.50 402.86 L707.50 403.54 L708.50 404.07 L709.50 404.18 L710.50 403.84 L711.50 403.20 L712.50 402.56 L713.50 402.22 L714.50 402.33 L715.50 402.86 L716.50 403.54 L717.50 404.07 L718.50 404.18 L719.50 403.84 L720.50 403.20 L721.50 402.56 L722.50 402.22 L723.50 402.33 L724.50 402.86 L725.50 403.54 L726.50 404.07 L727.50 404.18 L728.50 403.84 L729.50 403.20 L730.50 402.56 L731.50 402.22 L732.50 402.33 L733.50 402.86 L734.50 403.54 L735.50 404.07 L736.50 404.18 L737.50 403.84 L738.50 403.20 L739.50 402.56 L740.50 402.22 L741.50 402.33 L742.50 402.86 L743.50 403.54 L744.50 404.07 L745.50 404.18 L746.50 403.84 L747.50 403.20 L748.50 402.56 L749.50 402.22 L750.50 402.33 L751.50 402.86 L752.50 403.54 L753.50 404.07 L754.50 404.18 L755.50 403.84 L756.50 403.20 L757.50 402.56 L758.50 402.22 L759.50 402.33 L760.50 402.86 L761.50 403.54 L762.50 404.07 L763.50 404.18 L764.50 403.84 L765.50 403.20 L766.50 402.56 L767.50 402.22 L768.50 402.33 L769.50 402.86 L770.50 403.54 L771.50 404.07 L772.50 404.18 L773.50 402.00 L774.70 389.00 L776.00 395.00 L777.80 405.50 L778.00 405.49 L778.50 404.73 L779.00 402.19 L779.50 398.16 L780.00 393.15 L780.50 387.78 L781.00 382.71 L781.50 378.56 L782.00 375.84 L782.50 374.90 L783.00 375.84 L783.50 378.56 L784.00 382.71 L784.50 387.78 L785.00 393.15 L785.50 398.16 L786.00 402.19 L786.50 404.73 L787.00 405.49 L787.50 404.36 L788.00 401.49 L788.50 397.22 L789.00 392.09 L789.50 386.72 L790.00 381.78 L790.50 377.89 L791.00 375.51 L791.50 374.94 L792.00 376.25 L792.50 379.29 L793.00 383.67 L793.50 388.85 L794.00 394.20 L794.50 399.06 L795.00 402.83 L795.50 405.04 L796.00 405.41 L796.50 403.92 L797.00 400.73 L797.50 396.24 L798.00 391.01 L798.50 385.68 L799.00 380.90 L799.50 377.28 L800.00 375.24 L800.50 375.05 L801.00 376.73 L801.50 380.07 L802.00 384.66 L802.50 389.93 L803.00 395.24 L803.50 399.92 L804.00 403.40 L804.50 405.26 L805.00 405.26 L805.50 403.40 L806.00 399.92 L806.50 395.24 L807.00 389.93 L807.50 384.66 L808.00 380.07 L808.50 376.73 L809.00 375.05 L809.50 375.24 L810.00 377.28 L810.50 380.90 L811.00 385.68 L811.50 391.01 L812.00 396.24 L812.50 400.73 L813.00 403.92 L813.50 405.41 L814.00 405.04 L814.50 402.83 L815.00 399.06 L815.50 394.20 L816.00 388.85 L816.50 383.67 L817.00 379.29 L817.50 376.25 L818.00 374.94 L818.50 375.51 L819.00 377.89 L819.50 381.78 L820.00 386.72 L820.50 392.09 L821.00 397.22 L821.50 401.49 L822.00 404.36 L822.50 405.49 L823.00 404.73 L823.50 402.19 L824.00 398.16 L824.50 393.15 L825.00 387.78 L825.50 382.71 L826.00 378.56 L826.50 375.84 L827.00 374.90 L827.50 375.84 L828.00 378.56 L828.50 382.71 L829.00 387.78 L829.50 393.15 L830.00 398.16 L830.50 402.19 L831.00 404.73 L831.50 405.49 L832.00 404.36 L832.50 401.49 L833.00 397.22 L833.50 392.09 L834.00 386.72 L834.50 381.78 L835.00 377.89 L835.50 375.51 L836.00 374.94 L836.50 376.25 L837.00 379.29 L837.50 383.67 L838.00 388.85 L838.50 394.20 L839.00 399.06 L839.50 402.83 L840.00 405.04 L840.50 405.41 L841.00 403.92 L841.50 400.73 L842.00 396.24 L842.50 391.01 L843.00 385.68 L843.50 380.90 L844.00 377.28 L844.50 375.24 L845.00 375.05 L845.50 376.73 L846.00 380.07 L846.50 384.66 L847.00 389.93 L847.50 395.24 L848.00 399.92 L848.50 403.40 L849.00 405.26 L849.50 405.26 L850.00 403.40 L850.50 399.92 L851.00 395.24 L851.50 389.93 L852.00 384.66 L852.50 380.07 L853.00 376.73 L853.50 375.05 L854.00 375.24 L854.50 377.28 L855.00 380.90 L855.50 385.68 L856.00 391.01 L856.50 396.24 L857.00 400.73 L857.50 403.92 L858.00 405.41 L858.50 405.04 L859.00 402.83 L859.50 399.06 L860.00 394.20 L860.50 388.85 L861.00 383.67 L861.50 379.29 L862.00 376.25 L862.50 374.94 L863.00 375.51 L863.50 377.89 L864.00 381.78 L864.50 386.72 L865.00 392.09 L865.50 397.22 L866.00 401.49 L866.50 404.36 L867.00 405.49 L867.50 404.73 L868.00 402.19 L868.50 398.16 L869.00 393.15 L869.50 387.78 L870.00 382.71 L870.50 378.56 L871.00 375.84 L871.50 374.90 L872.00 375.84 L872.50 378.56 L873.00 382.71 L873.50 387.78 L874.00 393.15 L874.50 398.16 L875.00 402.19 L875.50 404.73 L876.00 405.49 L876.50 404.36 L877.00 401.49 L877.50 397.22 L878.00 392.09 L878.50 386.72 L879.00 381.78 L879.50 377.89 L880.00 375.51 L880.50 374.94 L881.00 376.25 L881.50 379.29 L882.00 383.67 L882.50 388.85 L883.00 394.20 L883.50 399.06 L884.00 402.83 L884.50 405.04 L885.00 405.41 L885.50 403.92 L886.00 400.73 L886.50 396.24 L887.00 391.01 L887.50 385.68 L888.00 380.90 L888.50 377.28 L889.00 375.24 L889.50 375.05 L890.00 376.73 L890.50 380.07 L891.00 384.66 L891.50 389.93 L892.00 395.24 L892.50 399.92 L893.00 403.40 L893.50 405.26 L894.00 405.26 L894.50 403.40 L895.00 399.92 L895.50 395.24 L896.00 389.93 L896.50 384.66 L897.00 380.07 L897.50 376.73 L898.00 375.05 L898.50 375.24 L899.00 377.28 L899.50 380.90 L900.00 385.68 L900.50 391.01 L901.00 396.24 L901.50 400.73 L902.00 403.92 L902.50 405.41 L903.00 405.04 L903.50 402.83 L904.00 399.06 L904.50 394.20 L905.00 388.85 L905.50 383.67 L906.00 379.29 L906.50 376.25 L907.00 374.94 L907.50 375.51 L908.00 377.89 L908.50 381.78 L909.00 386.72 L909.50 392.09 L910.00 397.22 L910.50 401.49 L911.00 404.36 L911.50 405.49 L912.00 404.73 L912.50 402.19 L913.00 398.16 L913.50 393.15 L914.00 387.78 L914.50 382.71 L915.00 378.56 L915.50 375.84 L916.00 374.90 L916.50 375.84 L917.00 378.56 L917.50 382.71 L918.00 387.78 L918.50 393.15 L919.00 398.16 L919.50 402.19 L920.00 404.73 L920.50 405.49 L921.00 404.36 L921.50 401.49 L922.00 397.22 L922.50 392.09 L923.00 386.72 L923.50 381.78 L924.00 377.89 L924.50 375.51 L925.00 374.94 L925.50 376.25 L926.00 379.29 L926.50 383.67 L927.00 388.85 L927.50 394.20 L928.00 399.06 L928.50 402.83 L929.00 405.04 L929.50 405.41 L930.00 403.92 L930.50 400.73 L931.00 396.24 L931.50 391.01 L932.00 385.68 L932.50 380.90 L933.00 377.28 L933.50 375.24 L934.00 375.05 L934.50 376.73 L935.00 380.07 L935.50 384.66" fill="none" stroke="#3A3AF2" stroke-width="1.0"/><rect x="505.5" y="476.5" width="5.6" height="5.6" fill="#fff" stroke="#222" stroke-width="0.9"/><path d="M511 362L513 364.5L511 367Z" fill="#E8D820"/></svg>
<div style="position:absolute;left:945px;top:311px;width:10px;height:194px;background:linear-gradient(90deg,#EDE6D8,#FBF9F4);"></div>
<div style="position:absolute;left:945px;top:311px;width:10px;height:10px;border:1px solid #B5A997;border-radius:2px;background:linear-gradient(#F6F3EC,#E8E1D2);"></div>
<svg style="position:absolute;left:947px;top:314px" width="6" height="5" viewBox="0 0 6 5"><path d="M0.5 4L3 1.2L5.5 4" fill="none" stroke="#707070" stroke-width="0.9"/></svg>
<div style="position:absolute;left:945px;top:495.5px;width:10px;height:9.5px;border:1px solid #B5A997;border-radius:2px;background:linear-gradient(#F6F3EC,#E8E1D2);"></div>
<svg style="position:absolute;left:947px;top:498px" width="6" height="5" viewBox="0 0 6 5"><path d="M0.5 1L3 3.8L5.5 1" fill="none" stroke="#707070" stroke-width="0.9"/></svg>
<div style="position:absolute;left:945px;top:399px;width:10px;height:72.5px;border:1px solid #A89B88;border-radius:2px;background:linear-gradient(90deg,#FBFAF6,#EEE8DC);"></div>
<svg style="position:absolute;left:947.5px;top:433px" width="5" height="5" viewBox="0 0 5 5"><path d="M0 1H5M0 2.5H5M0 4H5" stroke="#9A8E7C" stroke-width="0.8"/></svg>
<div style="position:absolute;left:946px;top:505.5px;width:10px;height:10px;background:#fff;"></div>
<div style="position:absolute;left:0;top:519.5px;width:960px;height:20.5px;background:linear-gradient(#F8F6F0,#EAE4D6);border-top:1px solid #A4A09A;border-right:1px solid #A8A29A;"></div>
<div style="position:absolute;left:0px;top:539px;width:30px;height:1px;background:#1A1A1A;"></div>
<div style="position:absolute;left:30px;top:539px;width:215px;height:1px;background:#C8C8C8;"></div>
<div style="position:absolute;left:245px;top:539px;width:715px;height:1px;background:#1A1A1A;"></div>
<div style="position:absolute;left:6px;top:524.94px;font-size:8.51px;line-height:8.51px;color:#222;white-space:nowrap;transform:scaleX(0.893);transform-origin:left center;">Stopped</div>
<svg style="position:absolute;left:45px;top:524.5px" width="6" height="9" viewBox="0 0 6 9"><path d="M0.5 0.5L5.5 4.5L0.5 8.5Z" fill="#2E9A2E"/></svg>
<div style="position:absolute;left:55px;top:521px;width:17px;height:16.5px;background:linear-gradient(#C9E6FB,#9FD2F9);border:1px solid #9ACBEF;"></div>
<div style="position:absolute;left:60px;top:525.5px;width:7px;height:7px;background:#F00000;"></div>
<div class="sep" style="left:72px;top:522px;height:15px;"></div>
<div style="position:absolute;left:76px;top:524.94px;font-size:8.51px;line-height:8.51px;color:#222;white-space:nowrap;transform:scaleX(0.893);transform-origin:left center;">Trigger</div>
<div style="position:absolute;left:106.5px;top:521px;width:46px;height:16px;background:#fff;border:1px solid #DDD8CC;"></div>
<div style="position:absolute;left:109px;top:524.94px;font-size:8.51px;line-height:8.51px;color:#222;white-space:nowrap;transform:scaleX(0.893);transform-origin:left center;">Single</div>
<svg style="position:absolute;left:141.5px;top:527.3px" width="6" height="4" viewBox="0 0 6 4"><path d="M0 0.2H6L3 3.5Z" fill="#808080"/></svg>
<svg style="position:absolute;left:156px;top:522px" width="13" height="13" viewBox="0 0 13 13"><path d="M1 10H3.5V3H7V10H9" fill="none" stroke="#202020" stroke-width="1.2"/><path d="M8 0.5H12.5V5Z" fill="#101010"/><path d="M5.5 6V12" stroke="#30B040" stroke-width="1.3"/></svg>
<div class="sep" style="left:172px;top:522px;height:15px;"></div>
<div style="position:absolute;left:177.5px;top:521px;width:27px;height:16px;background:#fff;border:1px solid #DDD8CC;"></div>
<div style="position:absolute;left:180px;top:524.94px;font-size:8.51px;line-height:8.51px;color:#222;white-space:nowrap;transform:scaleX(0.893);transform-origin:left center;">A</div>
<svg style="position:absolute;left:193.5px;top:527.3px" width="6" height="4" viewBox="0 0 6 4"><path d="M0 0.2H6L3 3.5Z" fill="#808080"/></svg>
<div class="sep" style="left:208px;top:522px;height:15px;"></div>
<svg style="position:absolute;left:213px;top:524px" width="12" height="11" viewBox="0 0 12 11"><path d="M1 10L11 1M3 3L9 9" stroke="#B8BCE0" stroke-width="0.9"/></svg>
<div style="position:absolute;left:227px;top:521px;width:15.5px;height:16.5px;background:#D4E0E6;"></div>
<svg style="position:absolute;left:229px;top:524px" width="12" height="11" viewBox="0 0 12 11"><path d="M1 1L11 10M3 8L9 2" stroke="#A8B4D8" stroke-width="0.9"/></svg>
<div class="ctl" style="left:249.5px;top:521px;width:66.5px;height:16.5px;"><div class="cb" style="left:0;width:16px;border-right:1px solid #A99F92;"></div><div class="cb" style="right:0;width:16px;border-left:1px solid #A99F92;"></div></div>
<svg style="position:absolute;left:255.0px;top:525.75px" width="6" height="7" viewBox="0 0 6 7"><path d="M5 0.3L1 3.5L5 6.7Z" fill="#0A74D6"/></svg>
<svg style="position:absolute;left:304.5px;top:525.75px" width="6" height="7" viewBox="0 0 6 7"><path d="M1 0.3L5 3.5L1 6.7Z" fill="#0A74D6"/></svg>
<div style="position:absolute;left:269.0px;top:525.09px;font-size:8.40px;line-height:8.40px;color:#222;white-space:nowrap;transform:scaleX(0.893);transform-origin:left center;">1 V</div>
<div class="sep" style="left:319.5px;top:522px;height:15px;"></div>
<div class="ctl" style="left:325px;top:521px;width:67px;height:16.5px;"><div class="cb" style="left:0;width:16px;border-right:1px solid #A99F92;"></div><div class="cb" style="right:0;width:16px;border-left:1px solid #A99F92;"></div></div>
<svg style="position:absolute;left:330.5px;top:525.75px" width="6" height="7" viewBox="0 0 6 7"><path d="M5 0.3L1 3.5L5 6.7Z" fill="#0A74D6"/></svg>
<svg style="position:absolute;left:380.5px;top:525.75px" width="6" height="7" viewBox="0 0 6 7"><path d="M1 0.3L5 3.5L1 6.7Z" fill="#0A74D6"/></svg>
<div style="position:absolute;left:344.5px;top:525.09px;font-size:8.40px;line-height:8.40px;color:#222;white-space:nowrap;transform:scaleX(0.893);transform-origin:left center;">30 %</div>
<svg style="position:absolute;left:396px;top:523px" width="12" height="12" viewBox="0 0 12 12"><path d="M0.5 2H6L11 9" fill="none" stroke="#1A1AD0" stroke-width="1.1"/><path d="M1 9Q4 3 7 6T11 5" fill="none" stroke="#2A2A2A" stroke-width="0.9"/><circle cx="9" cy="9" r="1.8" fill="#40B040"/></svg>
<div class="ctl" style="left:412.5px;top:521px;width:67.5px;height:16.5px;border-color:#D2CCC0;"><div class="cb" style="left:0;width:16px;border-right:1px solid #A99F92;"></div><div class="cb" style="right:0;width:16px;border-left:1px solid #A99F92;"></div></div>
<svg style="position:absolute;left:418.0px;top:525.75px" width="6" height="7" viewBox="0 0 6 7"><path d="M5 0.3L1 3.5L5 6.7Z" fill="#8DBDE6"/></svg>
<svg style="position:absolute;left:468.5px;top:525.75px" width="6" height="7" viewBox="0 0 6 7"><path d="M1 0.3L5 3.5L1 6.7Z" fill="#8DBDE6"/></svg>
<div style="position:absolute;left:432.0px;top:525.09px;font-size:8.40px;line-height:8.40px;color:#B8B8B8;white-space:nowrap;transform:scaleX(0.893);transform-origin:left center;">0 s</div>
<div class="sep" style="left:483px;top:522px;height:15px;"></div>
<div style="position:absolute;left:488px;top:524.94px;font-size:8.51px;line-height:8.51px;color:#222;white-space:nowrap;transform:scaleX(0.893);transform-origin:left center;">Measurements</div>
<svg style="position:absolute;left:542.5px;top:524px;opacity:1" width="10" height="10" viewBox="0 0 10 10"><defs><linearGradient id="gg" x1="0" y1="0" x2="0" y2="1"><stop offset="0" stop-color="#4CC064"/><stop offset="1" stop-color="#109030"/></linearGradient></defs><rect x="0.5" y="0.5" width="9" height="9" rx="1.5" fill="url(#gg)" stroke="#0C7A26" stroke-width="0.8"/><path d="M2 5H8M5 2V8" stroke="#fff" stroke-width="1.6"/></svg>
<svg style="position:absolute;left:558px;top:524px;opacity:0.3" width="10" height="10" viewBox="0 0 10 10"><defs><linearGradient id="gg" x1="0" y1="0" x2="0" y2="1"><stop offset="0" stop-color="#4CC064"/><stop offset="1" stop-color="#109030"/></linearGradient></defs><rect x="0.5" y="0.5" width="9" height="9" rx="1.5" fill="url(#gg)" stroke="#0C7A26" stroke-width="0.8"/><path d="M2 5H8" stroke="#fff" stroke-width="1.6"/></svg>
<svg style="position:absolute;left:574px;top:524px;opacity:0.3" width="10" height="10" viewBox="0 0 10 10"><defs><linearGradient id="gg" x1="0" y1="0" x2="0" y2="1"><stop offset="0" stop-color="#4CC064"/><stop offset="1" stop-color="#109030"/></linearGradient></defs><rect x="0.5" y="0.5" width="9" height="9" rx="1.5" fill="url(#gg)" stroke="#0C7A26" stroke-width="0.8"/><path d="M1.5 7.5L5 3L8.5 7.5Z" fill="#fff"/></svg>
<div class="sep" style="left:588px;top:522px;height:15px;"></div>
<div style="position:absolute;left:593px;top:524.94px;font-size:8.51px;line-height:8.51px;color:#222;white-space:nowrap;transform:scaleX(0.893);transform-origin:left center;">Rulers</div>
<svg style="position:absolute;left:619px;top:524px;opacity:1" width="10" height="10" viewBox="0 0 10 10"><defs><linearGradient id="gg" x1="0" y1="0" x2="0" y2="1"><stop offset="0" stop-color="#4CC064"/><stop offset="1" stop-color="#109030"/></linearGradient></defs><rect x="0.5" y="0.5" width="9" height="9" rx="1.5" fill="url(#gg)" stroke="#0C7A26" stroke-width="0.8"/><path d="M1.5 7.5L5 3L8.5 7.5Z" fill="#fff"/></svg>
<div style="position:absolute;left:634.5px;top:524.94px;font-size:8.51px;line-height:8.51px;color:#222;white-space:nowrap;transform:scaleX(0.893);transform-origin:left center;">Notes</div>
<svg style="position:absolute;left:658px;top:524px;opacity:1" width="10" height="10" viewBox="0 0 10 10"><defs><linearGradient id="gg" x1="0" y1="0" x2="0" y2="1"><stop offset="0" stop-color="#4CC064"/><stop offset="1" stop-color="#109030"/></linearGradient></defs><rect x="0.5" y="0.5" width="9" height="9" rx="1.5" fill="url(#gg)" stroke="#0C7A26" stroke-width="0.8"/><path d="M1.5 7.5L5 3L8.5 7.5Z" fill="#fff"/></svg>
<svg style="position:absolute;left:908.5px;top:528.5px" width="8" height="11" viewBox="0 0 8 11"><path d="M0.5 0.5V8.5L2.5 6.8L4 9.8L5.2 9.2L3.8 6.3H6.5Z" fill="#fff" stroke="#555" stroke-width="0.7"/></svg>
</body></html>
